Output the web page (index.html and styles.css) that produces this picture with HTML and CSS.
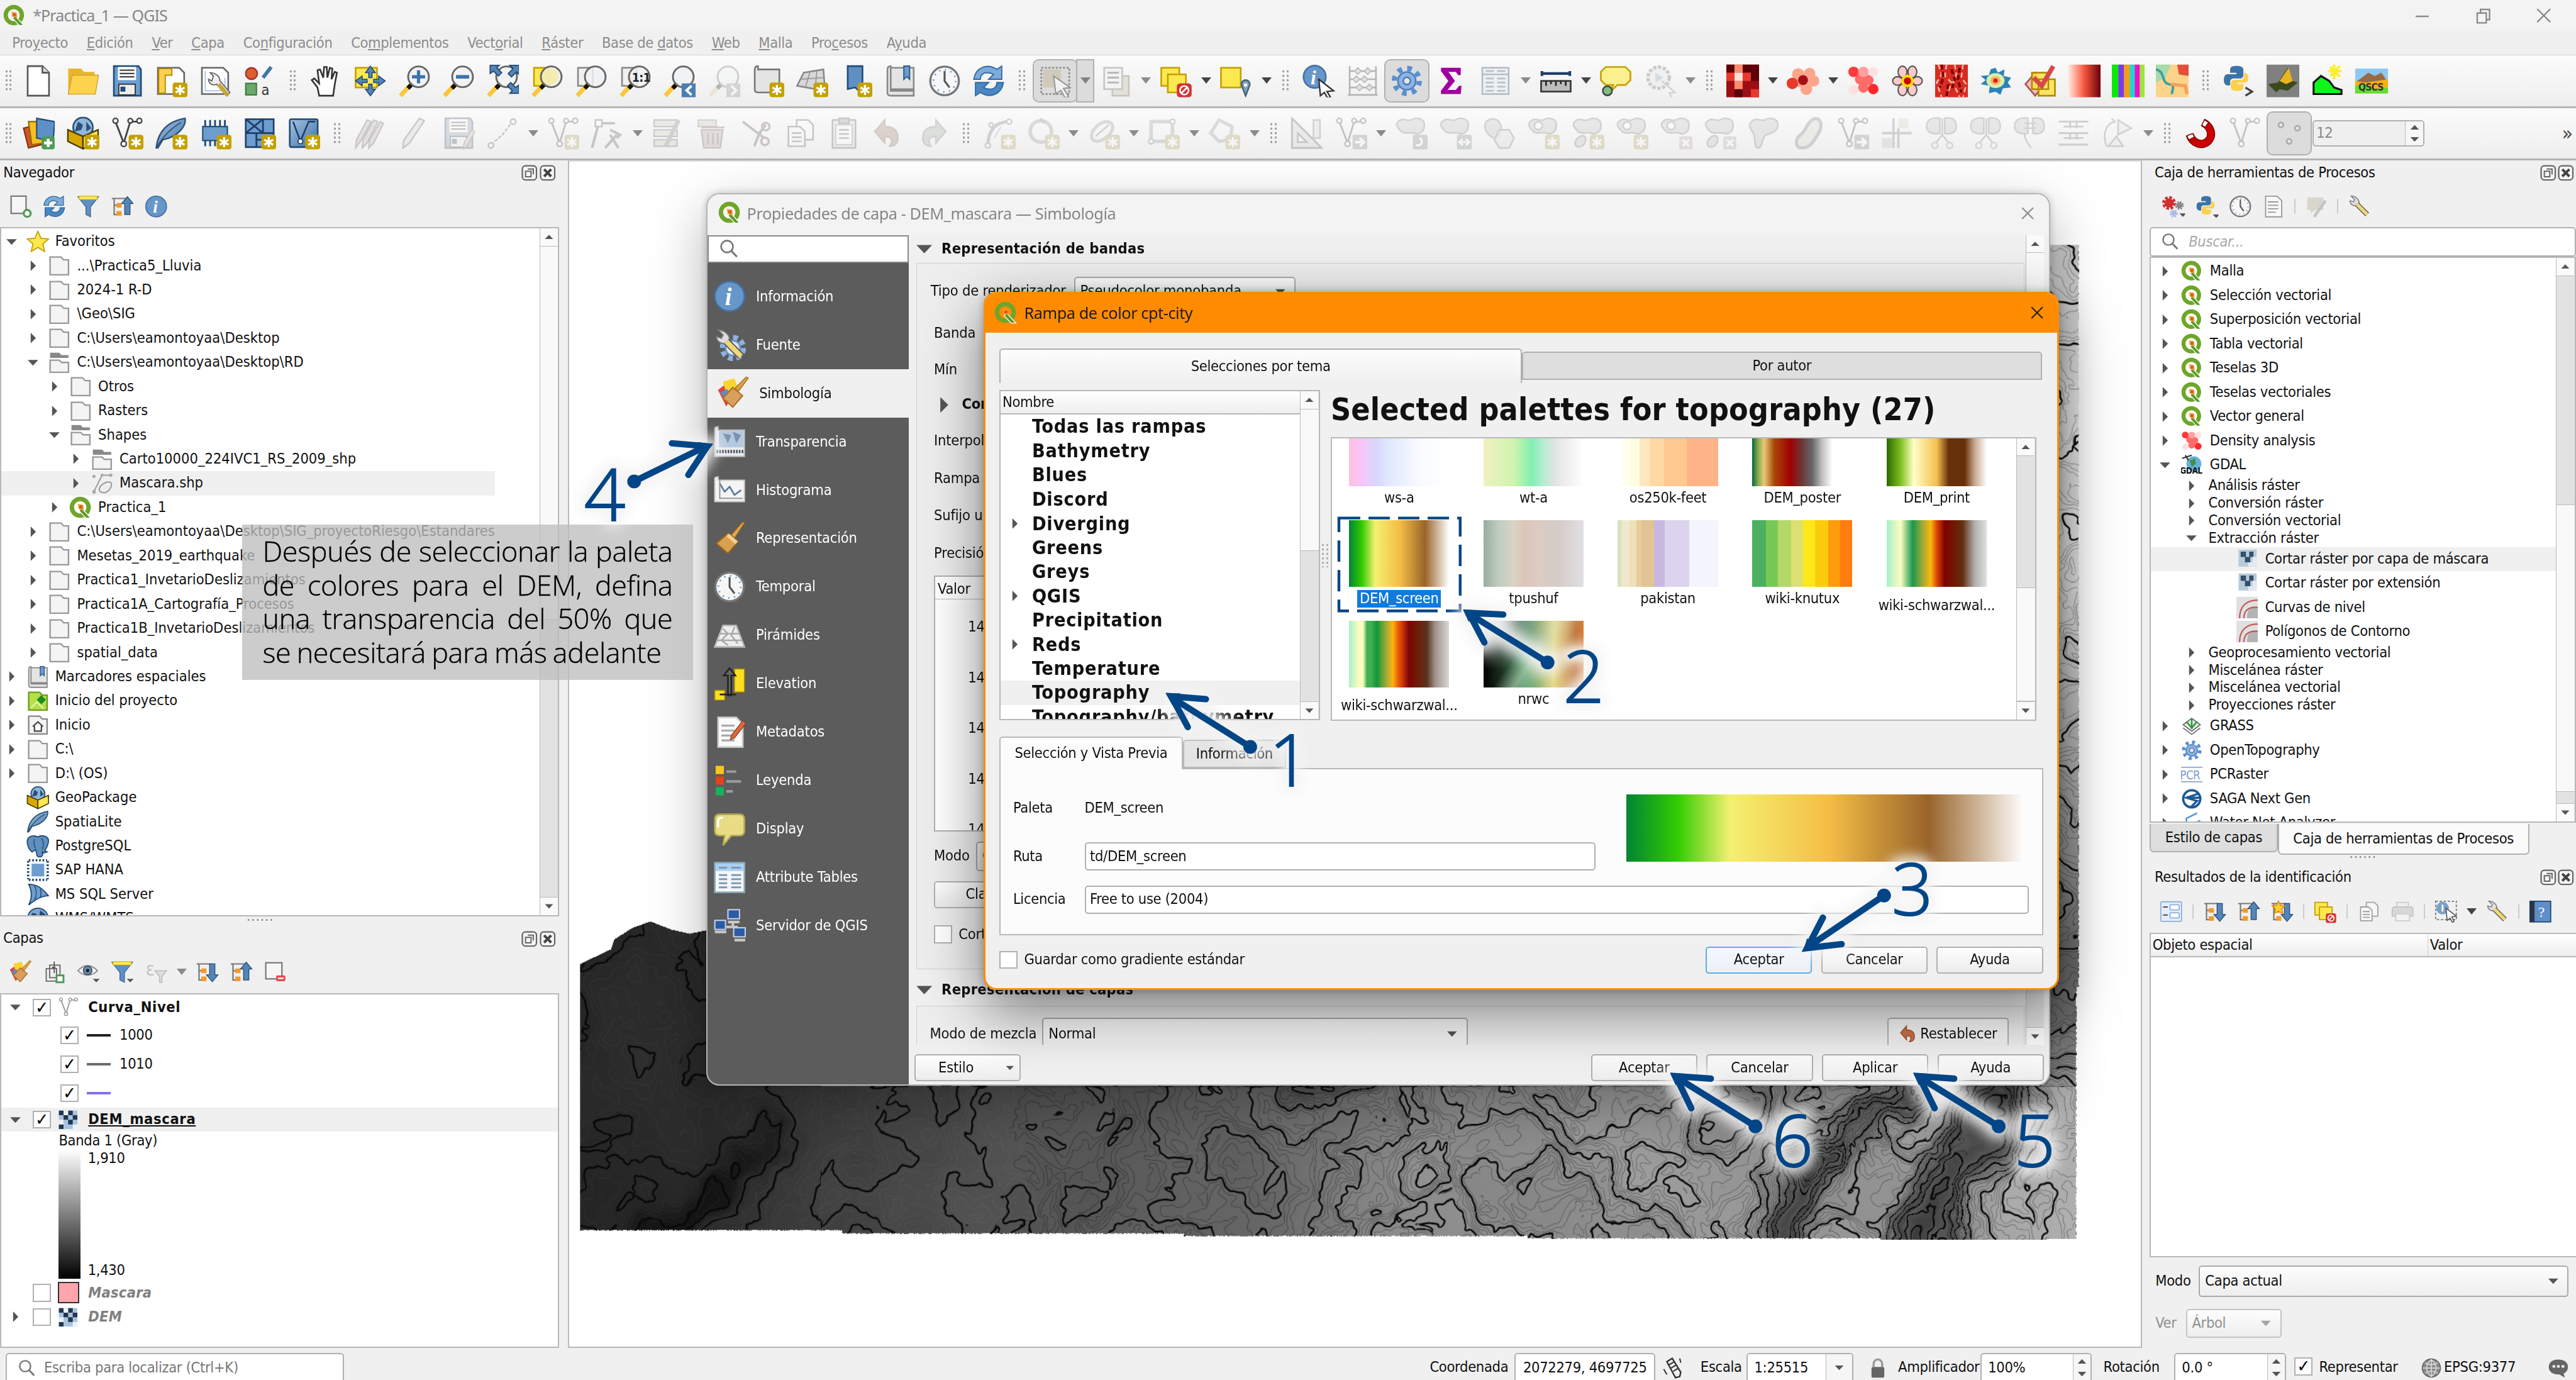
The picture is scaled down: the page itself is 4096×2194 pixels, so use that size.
FILE: index.html
```
<!DOCTYPE html>
<html lang="es">
<head>
<meta charset="utf-8">
<title>*Practica_1 — QGIS</title>
<link rel="stylesheet" href="styles.css">
</head>
<body>
<svg class="defs" aria-hidden="true">
<defs>
<linearGradient id="gr"><stop offset="0" stop-color="#fff0e8"/><stop offset=".5" stop-color="#f8553c"/><stop offset="1" stop-color="#67000d"/></linearGradient>
<linearGradient id="gb" x1="0" y1="0" x2="1" y2="1"><stop offset="0" stop-color="#a5c4e2"/><stop offset="1" stop-color="#3c72a8"/></linearGradient>
<filter id="halo" x="-10%" y="-10%" width="120%" height="120%" color-interpolation-filters="sRGB"><feMorphology in="SourceAlpha" operator="dilate" radius="3.4"/><feGaussianBlur stdDeviation="3.8" result="a"/><feFlood flood-color="#f4f4f4" flood-opacity=".92"/><feComposite in2="a" operator="in" result="g"/><feMerge><feMergeNode in="g"/><feMergeNode in="SourceGraphic"/></feMerge></filter>
</defs>
<symbol id="bd" viewBox="0 0 20 20"><rect x="11" y="11" width="9" height="9" rx="1.6" fill="#c4a000"/><path d="M15.5 12.4v6.2M12.8 14l5.4 3.1M18.2 14l-5.4 3.1" stroke="#fff" stroke-width="1.3"/></symbol>
<symbol id="bp" viewBox="0 0 20 20"><rect x="12" y="12" width="8" height="8" rx="1.6" fill="#4e9a58"/><path d="M16 13.5v5M13.5 16h5" stroke="#fff" stroke-width="1.7"/></symbol>
<symbol id="rt" viewBox="0 0 8 8"><path d="M2.6 .8l3.200 3.200-3.200 3.200z" fill="#555"/></symbol>
<symbol id="dn" viewBox="0 0 8 8"><path d="M.8 2.4h6.4L4 5.8z" fill="#555"/></symbol>
<symbol id="up" viewBox="0 0 8 8"><path d="M.8 5.6h6.4L4 2.2z" fill="#555"/></symbol>
<symbol id="mag" viewBox="0 0 12 12"><circle cx="5" cy="4.6" r="3.6" fill="none" stroke="#777" stroke-width="1"/><path d="M7.6 7.2l3.4 3.6" stroke="#777" stroke-width="1.2"/></symbol>
<symbol id="dk" viewBox="0 0 10 10"><rect x=".6" y=".6" width="8.8" height="8.8" rx="2" fill="#f6f6f6" stroke="#666" stroke-width=".9"/><path d="M4 2.6h3.4V6M2.6 4h3.4v3.4H2.6z" fill="none" stroke="#666" stroke-width=".8"/></symbol>
<symbol id="dx" viewBox="0 0 10 10"><rect x=".6" y=".6" width="8.8" height="8.8" rx="2" fill="#f6f6f6" stroke="#666" stroke-width=".9"/><path d="M2.8 2.8l4.4 4.4M7.2 2.8L2.8 7.2" stroke="#444" stroke-width="1.6"/></symbol>
<symbol id="q" viewBox="0 0 20 20"><circle cx="9.6" cy="9.6" r="7.3" fill="none" stroke="#6fa52b" stroke-width="3.8"/><path d="M10.5 10l8.3 9h-4.2l-6-6.400z" fill="#5b9a2a" stroke="#fff" stroke-width=".7"/><path d="M7.500 6.600l4.700.8.6 4.700-4.600-1z" fill="#f0a040"/><circle cx="10.200" cy="9.300" r="1.500" fill="#e05a10"/></symbol>
<symbol id="star" viewBox="0 0 20 20"><path d="M10 1l2.700 6 6.500.6-4.900 4.300 1.500 6.500L10 15l-5.800 3.400 1.500-6.500L.8 7.600 7.300 7z" fill="#fce94f" stroke="#c4a000"/></symbol>
<symbol id="fo" viewBox="0 0 20 20"><path d="M2 2.500h9.500l2.300 2.500H18v13H2z" fill="#f4f4f4" stroke="#999" stroke-width="1.300"/></symbol>
<symbol id="foo" viewBox="0 0 20 20"><path d="M2 1.500h8l1.800 2H18v2.500H2z" fill="#888"/><path d="M2 8h8l2 2h6v8.500H2z" fill="#f4f4f4" stroke="#999" stroke-width="1.300"/></symbol>
<symbol id="vec" viewBox="0 0 20 20"><path d="M3 17L10 3h7.500M8 17c-2-4 5-9 9-8 3 1 0 8-4 9-3 .6-4 0-5-1z" fill="#eee" stroke="#999" stroke-width="1.100"/><circle cx="3" cy="4" r="1.400" fill="#aaa"/><circle cx="3" cy="17.500" r="1.600" fill="#aaa"/><circle cx="10" cy="3" r="1.300" fill="#aaa"/><circle cx="17.500" cy="3" r="1.500" fill="#aaa"/></symbol>
<symbol id="bm" viewBox="0 0 20 20"><path d="M2 3q0-2 2-2v14h14v4H4q-2 0-2-2zM4 2h14v14H4z" fill="#e4e4e4" stroke="#888" stroke-width="1"/><path d="M12 1h3.500v8l-1.700-1.700L12 9z" fill="#6d9dcf" stroke="#2f5f90" stroke-width=".8"/></symbol>
<symbol id="hp" viewBox="0 0 20 20"><path d="M2 2.500h9.500l2.300 2.500H18v13H2z" fill="#b4e04a" stroke="#6f9a20" stroke-width="1.300"/><path d="M13 5l4 4-4 4-4-4z" fill="#1f8a1f"/><path d="M4 16l5-5 6 6" fill="none" stroke="#f4ffd0" stroke-width=".8"/></symbol>
<symbol id="ho" viewBox="0 0 20 20"><path d="M2 2.500h9.500l2.300 2.500H18v13H2z" fill="#f4f4f4" stroke="#888" stroke-width="1.300"/><path d="M5.500 11.500l4.500-4 4.500 4M7 11v4.500h6V11" fill="#fff" stroke="#444" stroke-width="1.200"/></symbol>
<symbol id="gp" viewBox="0 0 20 20"><circle cx="10" cy="6.500" r="6" fill="#8fb7dd" stroke="#2d4f74"/><path d="M7 3l3 2-1 3-4 1M12 3l3 4-3 2" fill="#2d4f74"/><path d="M.8 8l9.200 4v7.500L.8 15z" fill="#d8a800" stroke="#4d3a00" stroke-width=".9"/><path d="M19.200 8L10 12v7.500l9.200-4.500z" fill="#fce94f" stroke="#4d3a00" stroke-width=".9"/></symbol>
<symbol id="fe" viewBox="0 0 20 20"><path d="M1 19C2 10 7 3 18.500 1c1 5-5 11.500-13.500 13L2 19z" fill="url(#gb)" stroke="#2d4f74" stroke-width=".9"/><path d="M1 19C5 12 10 7 16 3.500" stroke="#2d4f74" stroke-width=".7" fill="none"/></symbol>
<symbol id="pg" viewBox="0 0 20 20"><path d="M1 4c2-4 7-3 9-2 3-2 8-1 9 2 1 4-2 8-3 10l2 1-3 1-1-1v3c-1 2-5 2-5-1l-1-4-3 2C2 13 0 8 1 4z" fill="#5f8fbe" stroke="#234a72"/><path d="M7 4c-1 3 0 6 1 8M13 3c2 2 2 6 1 10" fill="none" stroke="#234a72" stroke-width=".8"/></symbol>
<symbol id="hana" viewBox="0 0 20 20"><rect x="4.500" y="4.500" width="11" height="11" fill="#6d9dcf"/><path d="M2 1.500h16M2 18.500h16M1.500 2v16M18.500 2v16" stroke="#234a72" stroke-width="2" stroke-dasharray="1.500 1.500"/></symbol>
<symbol id="ms" viewBox="0 0 20 20"><path d="M2 1c6 0 12 3 17 10-5 0-11 3-17 8 3-6 3-12 0-18z" fill="#6d9dcf" stroke="#234a72"/><path d="M7 2c2 4 2 9 0 13M12 5c1 3 1 5 0 8" fill="none" stroke="#234a72" stroke-width=".8"/></symbol>
<symbol id="gl" viewBox="0 0 20 20"><circle cx="10" cy="10" r="9" fill="#7da7d0" stroke="#234a72"/><path d="M5 5l4 1-1 5-5 1zM12 3l5 4-3 5-3-3z" fill="#234a72"/></symbol>
<symbol id="ggl" viewBox="0 0 20 20"><circle cx="10" cy="10" r="8.500" fill="#8a8a8a" stroke="#666"/><path d="M2 10h16M10 2v16M4 5q6 4 12 0M4 15q6-4 12 0M10 2q-9 8 0 16q9-8 0-16" fill="none" stroke="#ddd" stroke-width=".9"/></symbol>
<symbol id="new" viewBox="0 0 20 20"><path d="M3.500 1h9l4 4v14h-13z" fill="#fff" stroke="#555" stroke-width="1"/><path d="M12.500 1v4h4" fill="#ddd" stroke="#555"/></symbol>
<symbol id="open" viewBox="0 0 20 20"><path d="M1 18V2.500h8l1.500 2H17V7" fill="#e8b62c"/><path d="M3.500 6.500H19.500L17.500 18H1z" fill="#fdd34d" stroke="#caa030" stroke-width=".5"/></symbol>
<symbol id="save" viewBox="0 0 20 20"><path d="M2 1h15l1.500 2v16H2z" fill="#6d9dcf" stroke="#204a75"/><rect x="4.500" y="1.500" width="11" height="8" fill="#fff"/><path d="M5.500 3.500h9M5.500 5.500h9M5.500 7.500h9" stroke="#444" stroke-width=".8"/><rect x="5" y="12" width="10" height="6.500" fill="#eee" stroke="#333" stroke-width=".7"/><rect x="6" y="13.500" width="3" height="3" fill="#204a75"/></symbol>
<symbol id="lay" viewBox="0 0 20 20"><path d="M2 2h13l3 3v13H2z" fill="#fff" stroke="#666"/><path d="M2.500 2.500h8v4h-4v11h-4z" fill="#fcd04f" stroke="#b88a00" stroke-width=".7"/><use href="#bd"/></symbol>
<symbol id="lm" viewBox="0 0 20 20"><path d="M2 2h13l3 3v13H2z" fill="#fff" stroke="#666"/><path d="M4 4v12h12V8" fill="none" stroke="#a8c3ee" stroke-width=".7"/><path d="M7 5l2 2-1 3-2-1c0 3 3 4 5 3l6 7 2-2-6-7c0-3-3-5-6-5z" fill="#eee" stroke="#666" stroke-width=".7"/><path d="M12 12l6 7" stroke="#c8a83c" stroke-width="2.500"/></symbol>
<symbol id="sty" viewBox="0 0 20 20"><circle cx="5" cy="5.500" r="3.500" fill="#d9622b" stroke="#a33"/><rect x="1.500" y="11.500" width="6.500" height="7" fill="#6ca86c" stroke="#3a7a3a" stroke-width=".8"/><path d="M12 8l5-6.500" stroke="#3f74aa" stroke-width="2.200"/><text x="11" y="18.500" font-size="9" font-family="DejaVu Sans" fill="#333">a</text></symbol>
<symbol id="hand" viewBox="0 0 20 20"><path d="M6 19l-1-5L1.500 9.500l1.500-1 3 3L5 3.500l1.500-.5 2 5L9 1.500h1.600L11 8l1.500-6 1.500.5L13.500 9l2-4.500 1.300.5-1.300 7-1 7z" fill="#fff" stroke="#333" stroke-width="1"/></symbol>
<symbol id="pan" viewBox="0 0 20 20"><rect x="1" y="2" width="13" height="12" fill="#fce94f" stroke="#c4a000"/><path d="M10 1l3 4h-2v3h-2V5H7zM10 19l3-4h-2v-3h-2v3H7zM1 10l4-3v2h3v2H5v2zM19 10l-4-3v2h-3v2h3v2z" fill="#5585b8" stroke="#204a75" stroke-width=".6"/></symbol>
<symbol id="zb" viewBox="0 0 20 20"><path d="M8 12L1.500 19" stroke="#fcc53a" stroke-width="2.600"/><path d="M9 11.500L6 14.500" stroke="#111" stroke-width="2.600"/><circle cx="12.500" cy="7.500" r="6.300" fill="#eef1f3" fill-opacity=".85" stroke="#666" stroke-width="1.100"/></symbol>
<symbol id="zi" viewBox="0 0 20 20"><use href="#zb"/><path d="M12.500 3.500v8M8.500 7.500h8" stroke="#3f74aa" stroke-width="2"/></symbol>
<symbol id="zo" viewBox="0 0 20 20"><use href="#zb"/><path d="M8.500 7.500h8" stroke="#3f74aa" stroke-width="2.200"/></symbol>
<symbol id="zf" viewBox="0 0 20 20"><use href="#zb"/><path d="M2.500 .5h5.500L6.500 2l3 3-2 2-3-3L2.500 5.500zM20 .5v5.500L18.500 4.500l-3 3-2-2 3-3L14.500 .5zM20 17.500h-5.500l1.500-1.500-3-3 2-2 3 3 2-1.500z" fill="#5585b8" stroke="#204a75" stroke-width=".7"/></symbol>
<symbol id="zs" viewBox="0 0 20 20"><rect x="2" y="2" width="9" height="11" fill="#fce94f" stroke="#c4a000"/><use href="#zb"/><circle cx="12" cy="7.500" r="5" fill="#f4ea9a" opacity=".7"/></symbol>
<symbol id="zl" viewBox="0 0 20 20"><rect x="2" y="2" width="9" height="11" fill="#f0f0f0" stroke="#888"/><use href="#zb"/></symbol>
<symbol id="z1" viewBox="0 0 20 20"><use href="#zl"/><text x="8" y="10.500" font-size="7.500" font-weight="700" font-family="DejaVu Sans Condensed" fill="#222">1:1</text></symbol>
<symbol id="zp" viewBox="0 0 20 20"><use href="#zb"/><rect x="11.500" y="11.500" width="8.500" height="8.500" fill="#4a7eb4"/><path d="M17.500 13l-3 2.800 3 2.800" fill="none" stroke="#fff" stroke-width="1.500"/></symbol>
<symbol id="zn" viewBox="0 0 20 20"><use href="#zb"/><rect x="11.500" y="11.500" width="8.500" height="8.500" fill="#888"/><path d="M14.500 13l3 2.800-3 2.800" fill="none" stroke="#fff" stroke-width="1.500"/></symbol>
<symbol id="nm" viewBox="0 0 20 20"><path d="M2 3q0-2 2-2v2h13v14H4q-2 0-2-2z" fill="#e4e4e4" stroke="#777"/><use href="#bd"/></symbol>
<symbol id="n3" viewBox="0 0 20 20"><path d="M5 5l12-2 1 13L1 13z" fill="#d8d8d8" stroke="#888"/><path d="M3 9l14-1M9 4L6 14M13 4l-1 11" stroke="#999" stroke-width=".7"/><use href="#bd"/></symbol>
<symbol id="nb" viewBox="0 0 20 20"><path d="M5 1h9v17l-4.500-4L5 15z" fill="#5f90c4" stroke="#204a75"/><use href="#bd"/></symbol>
<symbol id="clk" viewBox="0 0 20 20"><circle cx="10" cy="10" r="8.700" fill="#f7f7f7" stroke="#777" stroke-width="1.300"/><circle cx="10" cy="10" r="6.800" fill="none" stroke="#6d9dcf" stroke-width="1.100" stroke-dasharray=".8 2.760"/><path d="M10 4v6l3 4" fill="none" stroke="#555" stroke-width="1.200"/></symbol>
<symbol id="ref" viewBox="0 0 20 20"><path d="M1 9C2 2 9-1 15 3l3-2v8h-8l3-3C9 4 5 5 5 9z" fill="#7fabd9" stroke="#2d69a6" stroke-width=".7"/><path d="M19 11c-1 7-8 10-14 6l-3 2v-8h8l-3 3c4 2 8 1 8-3z" fill="#4a86c2" stroke="#2d69a6" stroke-width=".7"/></symbol>
<symbol id="sel" viewBox="0 0 20 20"><rect x="1.500" y="2" width="17" height="16" fill="none" stroke="#888" stroke-dasharray="1.200 1"/><rect x="2.500" y="3" width="11" height="11" fill="#cfcab9"/><path d="M9 7l10 7-4 .6 3 4.800-2 1-2.600-4.700-3 2.300z" fill="#f2f2f2" stroke="#999" stroke-width=".8"/></symbol>
<symbol id="frm" viewBox="0 0 20 20"><rect x="8" y="7" width="10" height="12" fill="#e0dccf" stroke="#bbb"/><rect x="3" y="2" width="11" height="13" fill="#f3f3f3" stroke="#bbb"/><path d="M5 5h7M5 8h7M5 11h7" stroke="#aaa" stroke-width="1.200"/></symbol>
<symbol id="des" viewBox="0 0 20 20"><rect x="1" y="2" width="11" height="11" fill="#fce94f" stroke="#c4a000"/><rect x="5" y="6" width="11" height="11" fill="#fce94f" stroke="#c4a000"/><rect x="10.500" y="11.500" width="9" height="8.500" rx="2" fill="#d93030"/><circle cx="15" cy="15.700" r="2.600" fill="none" stroke="#fff"/><path d="M13.500 17.200l3-3" stroke="#fff"/></symbol>
<symbol id="slo" viewBox="0 0 20 20"><rect x="1" y="2" width="12" height="12" fill="#fce94f" stroke="#c4a000"/><path d="M16 19l-2.300-6a2.500 2.500 0 1 1 4.600 0z" fill="#7fa5bd" stroke="#44667c"/><circle cx="16" cy="12.500" r="1" fill="#fff"/></symbol>
<symbol id="inf" viewBox="0 0 20 20"><circle cx="10" cy="10" r="9" fill="#6796c9" stroke="#4472a5"/><text x="7.200" y="15.500" font-size="15" font-style="italic" font-weight="700" font-family="Liberation Serif" fill="#fff">i</text></symbol>
<symbol id="idf" viewBox="0 0 20 20"><circle cx="7.500" cy="7.500" r="6.800" fill="#6796c9" stroke="#4472a5"/><text x="5" y="12" font-size="12" font-style="italic" font-weight="700" font-family="Liberation Serif" fill="#fff">i</text><path d="M10 9l9 7-4 .4 2 3.300-1.600.8-2-3.500-2.400 2z" fill="#fff" stroke="#333" stroke-width=".9"/></symbol>
<symbol id="aba" viewBox="0 0 20 20"><path d="M2 1v18M18 1v18M2 4h16M2 9h16M2 14h16M1 18.500h18" stroke="#b5b5b5" fill="none"/><path d="M5 4l2-2 2 2-2 2zM11 4l2-2 2 2-2 2zM4 9l2-2 2 2-2 2zM9 9l2-2 2 2-2 2zM6 14l2-2 2 2-2 2zM12 14l2-2 2 2-2 2z" fill="#eadfe0" stroke="#bbb" stroke-width=".7"/></symbol>
<symbol id="gear" viewBox="0 0 20 20"><circle cx="10" cy="10" r="7.600" fill="none" stroke="#5b8fd0" stroke-width="3.200" stroke-dasharray="2.800 3.170"/><circle cx="10" cy="10" r="5.400" fill="#8fb2e0" stroke="#4b7fc0"/><circle cx="10" cy="10" r="2.200" fill="#e6e6e6" stroke="#4b7fc0"/></symbol>
<symbol id="sig" viewBox="0 0 20 20"><path d="M4 2h12v4.500h-1.500L13 4.500H8.500L12.500 10l-4.500 5.500h5L15 13h1.500L16 18H4v-2l4.500-6L4 4z" fill="#a000a0"/></symbol>
<symbol id="tab" viewBox="0 0 20 20"><rect x="2" y="2" width="16" height="16" fill="#eef1f4" stroke="#b5bcc4"/><path d="M2 6h16" stroke="#b5bcc4"/><path d="M4 4h5M11 4h5M4 8.500h5M4 11h5M4 13.500h5M4 16h5M11 8.500h5M11 11h5M11 13.500h5M11 16h5" stroke="#bcc3ca" stroke-width="1.100"/></symbol>
<symbol id="rul" viewBox="0 0 20 20"><path d="M1.500 5.500h17M1.500 4v3M18.500 4v3" stroke="#1f3f66" stroke-width="1.600"/><rect x="1" y="10" width="18" height="6.500" fill="#bdbdbd" stroke="#333"/><path d="M4 10v3M7 10v2M10 10v3M13 10v2M16 10v3" stroke="#222"/></symbol>
<symbol id="tip" viewBox="0 0 20 20"><path d="M4 1.500h12l3 3v5l-3 3h-5l-4 4 1.500-4H4l-3-3v-5z" fill="#fbf08f" stroke="#c4a000"/><circle cx="5" cy="16" r="2.800" fill="#7fbf7f" stroke="#444"/></symbol>
<symbol id="act" viewBox="0 0 20 20"><circle cx="9" cy="8" r="6.500" fill="#efefef" stroke="#c0c0c0" stroke-width="2" stroke-dasharray="2 1"/><path d="M7 5l5 3-5 3z" fill="#ccd6df"/><path d="M11 10l8 7-3.500.3 1.500 2.700" fill="#f5f5f5" stroke="#ccc"/></symbol>
<symbol id="d1" viewBox="0 0 20 20"><rect width="20" height="20" fill="#9c0d14"/><path d="M0 0h5v5H0zM10 0h10v5H10zM5 15h5v5H5zM15 5h5v5h-5z" fill="#5d0008"/><path d="M5 0h5v5H5zM5 10h5v5H5z" fill="#fc8a6b"/><path d="M5 5h5v5H5z" fill="#fde4da"/><path d="M0 5h5v5H0zM10 5h5v5h-5zM15 15h5v5h-5z" fill="#e8392c"/></symbol>
<symbol id="d2" viewBox="0 0 20 20"><g fill="#fca58a"><circle cx="7" cy="6" r="3.700"/><circle cx="14" cy="5.500" r="3.500"/><circle cx="16.500" cy="10" r="3.400"/><circle cx="12" cy="15" r="3.600"/><circle cx="9" cy="9" r="5"/></g><circle cx="3.500" cy="11.500" r="3.500" fill="#e8392c"/><circle cx="10" cy="9.500" r="3" fill="#a50f15"/></symbol>
<symbol id="d3" viewBox="0 0 20 20"><g fill="#ff6a6a"><circle cx="8" cy="9" r="3.200"/><circle cx="13" cy="9.500" r="3.200"/><circle cx="10" cy="14" r="3.200"/></g><circle cx="4" cy="4.500" r="3.200" fill="#ff3a3a"/><circle cx="10" cy="4.500" r="3.200" fill="#ffa0a0"/><circle cx="16" cy="4.500" r="3" fill="#ffe0e0"/><circle cx="16" cy="15" r="3.200" fill="#ff2a2a"/><circle cx="4" cy="15.500" r="3" fill="#ffe0e0"/></symbol>
<symbol id="d4" viewBox="0 0 20 20"><g fill="#ffc9c9" stroke="#555" stroke-width=".8"><ellipse cx="7" cy="4.500" rx="2.700" ry="3.500"/><ellipse cx="13" cy="4.500" rx="2.700" ry="3.500"/><ellipse cx="4" cy="10" rx="3" ry="2.600"/><ellipse cx="16" cy="10" rx="3" ry="2.600"/><ellipse cx="7" cy="15.500" rx="2.700" ry="3.500"/><ellipse cx="13" cy="15.500" rx="2.700" ry="3.500"/></g><circle cx="10" cy="10" r="3" fill="#c00" stroke="#fd0" stroke-width="1.600"/></symbol>
<symbol id="d5" viewBox="0 0 20 20"><rect width="20" height="20" fill="#d82c20"/><path d="M2 0l2 6-3 5 3 9M7 0l-1 7 4 4-3 9M12 0l1 6-2 5 4 9M17 0l-1 8 3 4-2 8" fill="none" stroke="#ffb8a0" stroke-width="1" stroke-dasharray="3 2"/><path d="M4 0l1 8-2 6M10 3l2 6-2 7M15 2l-1 7 2 8M8 12l-1 8" fill="none" stroke="#7d0008" stroke-width="1.500" stroke-dasharray="3 1.500"/></symbol>
<symbol id="d6" viewBox="0 0 20 20"><path d="M10 2l1.500 3 4-2-.5 4 4.500 1-2 3 2 3-5 .5-1.500 4-3-2-4 1 .5-4.500L1 12l3-2.500L1 7l5-.5L7 3z" fill="#2b83ba"/><ellipse cx="10" cy="9.800" rx="5.500" ry="4.500" fill="#d8eeaa"/><ellipse cx="10" cy="9.800" rx="3" ry="2.600" fill="#fdae61"/><circle cx="10" cy="9.800" r="1.300" fill="#d7191c"/></symbol>
<symbol id="d7" viewBox="0 0 20 20"><path d="M1 12l6-7 4 9-4 5z" fill="#f2bcbc" stroke="#a55"/><path d="M5 5h10v10H5zM9 9h10v10H9z" fill="#fbe34a" fill-opacity=".85" stroke="#b08a00"/><path d="M6 8l5 5 7-12" fill="none" stroke="#d94848" stroke-width="2.800"/></symbol>
<symbol id="d8" viewBox="0 0 20 20"><rect width="20" height="20" fill="url(#gr)"/></symbol>
<symbol id="d9" viewBox="0 0 20 20"><rect width="20" height="20" fill="#9be83a"/><path d="M0 0h4v20H0z" fill="#0ce80c"/><path d="M4 0h3.500v20H4z" fill="#7a3ae8"/><path d="M7.500 0H11v20H7.500z" fill="#f89a1c"/><path d="M11 0h3v20h-3z" fill="#19d8d8"/><path d="M14 0h3v20h-3z" fill="#f40cd0"/></symbol>
<symbol id="d10" viewBox="0 0 20 20"><rect width="20" height="20" fill="#fbd48a"/><path d="M0 0h9l-3 8-6 3z" fill="#a8dba8"/><path d="M0 3c6 1 3 8 8 9s1 4 2 6" fill="none" stroke="#3aa0a8" stroke-width="1.500"/><path d="M13 0h7v7l-6-1z" fill="#e0503a"/><path d="M9 12l9 1 1 5" fill="none" stroke="#f5a05a" stroke-width="2"/></symbol>
<symbol id="py" viewBox="0 0 20 20"><path d="M10 1c-4 0-4.500 1.500-4.500 3v2H10v1H4C2 7 1 8.500 1 11s1 4 3 4h1.500v-2.500c0-1.500 1-2.500 2.500-2.500h4.500c1.500 0 2.500-1 2.500-2.500V4c0-2-1.500-3-5-3z" fill="#3b73a8"/><path d="M10.500 19c4 0 4.500-1.500 4.500-3v-2h-4.500v-1h5.500c2 0 2.500-1.500 2.500-3.500S17.500 6 16 6h-.5v2.500c0 1.500-1.500 2.500-3 2.500H8.500C7 11 6 12 6 13.500V16c0 2 1.500 3 4.500 3z" fill="#fcd04f"/></symbol>
<symbol id="pyc" viewBox="0 0 20 20"><use href="#py" width="17" height="17"/><path d="M14 14l4 2.500-4 2.500" fill="none" stroke="#444" stroke-width="1.300"/></symbol>
<symbol id="m1" viewBox="0 0 20 20"><rect width="20" height="20" fill="#808080"/><path d="M1 12l6-1 6-9 3 8 3 1-6 5-5-1-2 2z" fill="#3b4a1c"/><path d="M8 10l5.500-8L16 10l-4 2z" fill="#e8b420"/></symbol>
<symbol id="m2" viewBox="0 0 20 20"><path d="M1.500 18V11L6 7l5 3 3 4 4.500 1.500V18z" fill="#0cf81c" stroke="#111" stroke-width="1.200"/><path d="M14 0v9M10.500 4h8M11.500 1.500l6 6M17.500 1l-6 6" stroke="#fdf02a" stroke-width="1.600"/></symbol>
<symbol id="m3" viewBox="0 0 20 20"><rect y="2.500" width="20" height="15" fill="#8cc8f4"/><path d="M0 11l4-3 4-3 4 2 4-2 4 6v6.500H0z" fill="#9a6a44"/><path d="M0 10l6 1 7-1 7-1v8.500H0z" fill="#f8b010"/><path d="M0 13l6-1 6 3 8-1v3.500H0z" fill="#5fe02f"/><text x="2" y="16" font-size="6" font-weight="700" font-family="DejaVu Sans Condensed" fill="#333">QSCS</text></symbol>
<symbol id="ds" viewBox="0 0 20 20"><path d="M1 7l8-2 3 12-8 2z" fill="#d2562a" stroke="#803010" stroke-width=".8"/><path d="M4 3l9 0 1 13-8 1z" fill="#f4c020" stroke="#8a6a00" stroke-width=".8"/><path d="M9 1l11 2-1 12-10-2z" fill="#5f8fc8" stroke="#204a75" stroke-width=".8"/><use href="#bp"/></symbol>
<symbol id="gpn" viewBox="0 0 20 20"><use href="#gp"/><use href="#bd"/></symbol>
<symbol id="vl" viewBox="0 0 20 20"><path d="M3 3l5 13 4-13h5" fill="none" stroke="#444" stroke-width="1.100"/><g fill="#fff" stroke="#444" stroke-width=".9"><circle cx="3" cy="2.500" r="1.500"/><circle cx="8" cy="16.500" r="1.600"/><circle cx="12" cy="2.500" r="1.400"/><circle cx="17.500" cy="2.500" r="1.500"/></g></symbol>
<symbol id="vn" viewBox="0 0 20 20"><use href="#vl"/><use href="#bd"/></symbol>
<symbol id="fen" viewBox="0 0 20 20"><use href="#fe"/><use href="#bd"/></symbol>
<symbol id="mem" viewBox="0 0 20 20"><path d="M4 2v4M7 2v4M10 2v4M13 2v4M16 2v4M4 14v4M7 14v4M10 14v4" stroke="#204a75" stroke-width="1.100"/><rect x="2.500" y="6" width="15" height="8.500" fill="#6d9dcf" stroke="#204a75" stroke-width=".8"/><use href="#bd"/></symbol>
<symbol id="men" viewBox="0 0 20 20"><path d="M1.500 1.500h17v17h-17z" fill="#6d9dcf" stroke="#1f3f66"/><path d="M1.500 10h17M8 10v8.500M12 1.500V10M1.500 1.500L12 10M12 1.500L1.500 10M8 14h6" stroke="#1f3f66" stroke-width="1.100"/><use href="#bd"/></symbol>
<symbol id="vv" viewBox="0 0 20 20"><rect x="1.500" y="1.500" width="17" height="17" rx="1" fill="url(#gb)" stroke="#204a75"/><path d="M3.500 3l4.500 12 5-12h4" fill="none" stroke="#1f3f66"/><circle cx="8" cy="15" r="1.500" fill="#fff" stroke="#1f3f66" stroke-width=".7"/><use href="#bd"/></symbol>
<symbol id="pe" viewBox="0 0 20 20"><path d="M13 1l3 1.500L7 16l-4 3 .5-4.500z" fill="#d9d2c4" stroke="#555" stroke-width=".9"/></symbol>
<symbol id="pes" viewBox="0 0 20 20"><path d="M8 2l2.500 1L4 15l-3 4 .5-5zM12 2l2.500 1L8 16l-3 3 .5-5zM16 3l2 1-6 12-3 3 .5-5z" fill="#c9a89c" stroke="#555" stroke-width=".8"/></symbol>
<symbol id="sve" viewBox="0 0 20 20"><use href="#save"/><path d="M18 8l2 1-5 9-2 2 .5-4z" fill="#e0b8a8" stroke="#855" stroke-width=".7"/></symbol>
<symbol id="lin" viewBox="0 0 20 20"><path d="M3 17L10 11l6-8" fill="none" stroke="#555" stroke-dasharray="2 1"/><circle cx="3" cy="17.500" r="1.600" fill="#fff" stroke="#555"/><circle cx="16.500" cy="3" r="1.600" fill="#fff" stroke="#555"/></symbol>
<symbol id="vt" viewBox="0 0 20 20"><path d="M5 4L1 19M5 4h10M9 19l7-8M12 8l6 3-2 2M12 11l5 8" fill="none" stroke="#555" stroke-width="1.600"/><rect x="3" y="2" width="4" height="4" fill="#fff" stroke="#555"/></symbol>
<symbol id="te" viewBox="0 0 20 20"><path d="M2 2h14v4H2zM2 8h14v4H2zM2 14h14v4H2z" fill="#cfcf9a" stroke="#666" stroke-width=".9"/><path d="M17 2L9 18" stroke="#777" stroke-width="2.500"/></symbol>
<symbol id="tr" viewBox="0 0 20 20"><path d="M2 2h11v4H2z" fill="#cfc39a" stroke="#777" stroke-width=".8"/><path d="M4 8h13l-1.500 11h-10z" fill="#c99" stroke="#944" stroke-width=".9"/><path d="M4 6.500h14M8 10v7M11 10v7M14 10v7" stroke="#944"/></symbol>
<symbol id="cut" viewBox="0 0 20 20"><path d="M2 3l13 10M9 18l3-8 4-5" stroke="#555" stroke-width="1.500"/><circle cx="16" cy="6" r="2.300" fill="none" stroke="#944" stroke-width="1.300"/><circle cx="15.500" cy="15" r="2.300" fill="none" stroke="#944" stroke-width="1.300"/></symbol>
<symbol id="cop" viewBox="0 0 20 20"><path d="M8 2h7l3 3v9H8z" fill="#fff" stroke="#555"/><path d="M3 6h7l3 3v9H3z" fill="#fff" stroke="#555"/><path d="M5 10h6M5 12.500h6M5 15h6" stroke="#555"/></symbol>
<symbol id="pas" viewBox="0 0 20 20"><rect x="3" y="2" width="14" height="17" fill="#d9d0b8" stroke="#555"/><path d="M5 5h10v12H5z" fill="#fff" stroke="#777" stroke-width=".7"/><path d="M7 8h6M7 10.500h6M7 13h6M7 1h6v3H7z" stroke="#555" fill="#999"/></symbol>
<symbol id="un" viewBox="0 0 20 20"><path d="M8 2v4c6 0 8 3 8 7s-3 5-5 5c2-3 2-6-3-6v4L2 9z" fill="#c8704a" stroke="#a85a30"/></symbol>
<symbol id="re" viewBox="0 0 20 20"><path d="M12 2v4c-6 0-8 3-8 7s3 5 5 5c-2-3-2-6 3-6v4l6-7z" fill="#8fae94" stroke="#686"/></symbol>
<symbol id="arc" viewBox="0 0 20 20"><path d="M3 18C3 8 8 3 16 3" fill="none" stroke="#777" stroke-width="2"/><path d="M7 13l4-7" stroke="#aaa"/><g fill="#fff" stroke="#777"><circle cx="3" cy="17.500" r="1.500"/><circle cx="16" cy="3" r="1.500"/><circle cx="5" cy="5" r="1.300"/></g><use href="#bd"/></symbol>
<symbol id="ci" viewBox="0 0 20 20"><circle cx="8.500" cy="9" r="6.500" fill="none" stroke="#8a9a8a" stroke-width="2.200"/><path d="M8 1.500l3 2" stroke="#777" stroke-width="2"/><use href="#bd"/></symbol>
<symbol id="el" viewBox="0 0 20 20"><ellipse cx="9" cy="9" rx="7.500" ry="4.500" transform="rotate(-40 9 9)" fill="none" stroke="#8a9a8a" stroke-width="2"/><path d="M5 12l8-7" stroke="#777"/><use href="#bd"/></symbol>
<symbol id="sq" viewBox="0 0 20 20"><rect x="2.500" y="3" width="13" height="12" fill="none" stroke="#8a9a8a" stroke-width="2.200"/><circle cx="15.500" cy="3" r="1.500" fill="#fff" stroke="#777"/><circle cx="2.500" cy="15" r="1.500" fill="#fff" stroke="#777"/><use href="#bd"/></symbol>
<symbol id="pol" viewBox="0 0 20 20"><path d="M7 2l8 4-1 8-7 1-5-5z" fill="none" stroke="#8a9a8a" stroke-width="2"/><use href="#bd"/></symbol>
<symbol id="tri" viewBox="0 0 20 20"><path d="M1 1v18h18z" fill="#e3cfc4" stroke="#555" stroke-width="1.200"/><path d="M4.500 10v5.500H10z" fill="#f4f4f4" stroke="#555"/><path d="M14 2h4v11h-4z" fill="#ddd8c0" stroke="#777"/></symbol>
<symbol id="vm" viewBox="0 0 20 20"><use href="#vl"/><rect x="11" y="11" width="9" height="9" rx="1" fill="#7a8a8a"/><path d="M12.500 15.500h5M15.500 13l2.500 2.500-2.500 2.500" stroke="#fff" fill="none" stroke-width="1.500"/></symbol>
<symbol id="bl" viewBox="0 0 20 20"><path d="M2 3c3-3 5 0 8-1 3-2 8-1 8 3 0 5-4 6-6 5-3-1-6 1-8-1S0 5 2 3z" fill="#b8c2b8" stroke="#777"/></symbol>
<symbol id="b1" viewBox="0 0 20 20"><use href="#bl"/><rect x="11" y="11" width="9" height="9" rx="1" fill="#7a8a8a"/><path d="M13 17c3 2 5-3 2-4" stroke="#fff" fill="none" stroke-width="1.400"/></symbol>
<symbol id="b1b" viewBox="0 0 20 20"><use href="#bl"/><rect x="11" y="11" width="9" height="9" rx="1" fill="#7a8a8a"/><path d="M12.500 15.500h6M14.500 13.500l-2 2 2 2M16.500 13.500l2 2-2 2" stroke="#fff" fill="none" stroke-width="1.200"/></symbol>
<symbol id="b2" viewBox="0 0 20 20"><path d="M2 3c5-4 10 0 9 5s-3 6-6 4-5-6-3-9z" fill="#b8c2b8" stroke="#777"/><path d="M10 8h6l3 5-3 6h-6l-3-5z" fill="#c8d4dc" fill-opacity=".8" stroke="#777"/></symbol>
<symbol id="b3" viewBox="0 0 20 20"><use href="#bl"/><circle cx="7" cy="5.500" r="2.400" fill="#fff" stroke="#777"/><use href="#bd"/></symbol>
<symbol id="b4" viewBox="0 0 20 20"><use href="#bl"/><path d="M3 18c-3-3 3-8 5-6s-1 8-5 6z" fill="#b8c2b8" stroke="#777"/><use href="#bd"/></symbol>
<symbol id="b5" viewBox="0 0 20 20"><use href="#bl"/><circle cx="7" cy="5.500" r="2.400" fill="#fff" stroke="#777"/><rect x="12" y="12" width="8" height="8" rx="1" fill="#c9a0a0"/><path d="M14 14l4 4M18 14l-4 4" stroke="#fff" stroke-width="1.300"/></symbol>
<symbol id="b5b" viewBox="0 0 20 20"><use href="#bl"/><path d="M3 18c-3-3 3-8 5-6s-1 8-5 6z" fill="#b8c2b8" stroke="#777"/><rect x="12" y="12" width="8" height="8" rx="1" fill="#c9a0a0"/><path d="M14 14l4 4M18 14l-4 4" stroke="#fff" stroke-width="1.300"/></symbol>
<symbol id="b6" viewBox="0 0 20 20"><path d="M2 3c3-3 5 0 8-1 3-2 8-1 8 3 0 4-4 5-7 6s-2 8-5 8-1-6-3-9-3-5-1-7z" fill="#b8c2b8" stroke="#777"/></symbol>
<symbol id="b7" viewBox="0 0 20 20"><path d="M12 2c5-3 7 3 4 8s-5 9-10 9-4-6-1-8 4-7 7-9z" fill="#d4d4bc" stroke="#777" stroke-width="2"/></symbol>
<symbol id="b8" viewBox="0 0 20 20"><path d="M9 1c-5-1-8 1-8 5s5 5 8 4zM12 1c5-1 7 1 7 5s-4 5-7 4z" fill="#b8c2b8" stroke="#777"/><path d="M10.500 1v10l-4 5M10.500 11l4 5" stroke="#777" fill="none"/><circle cx="6" cy="17.500" r="1.800" fill="none" stroke="#b08888"/><circle cx="15" cy="17.500" r="1.800" fill="none" stroke="#b08888"/></symbol>
<symbol id="b8b" viewBox="0 0 20 20"><path d="M9 1c-5-1-8 1-8 5s5 5 8 4zM12 1c5-1 7 1 7 5s-4 5-7 4z" fill="#b8c2b8" stroke="#777"/><path d="M7 4h7M7 7h7M7 10c0 4 2 6 4 9" stroke="#777" fill="none"/></symbol>
<symbol id="b9" viewBox="0 0 20 20"><path d="M1 3h18M1 10h18M1 17h18M4 6h12M4 13h12M8 3v4M12 3v4M8 10v4M12 10v4" stroke="#777" stroke-width="1.200"/></symbol>
<symbol id="b10" viewBox="0 0 20 20"><path d="M3 18C0 10 3 4 8 3l-2-2" fill="none" stroke="#777"/><path d="M10 2l8 5-8 4zM9 12l-5 6h9z" fill="#dde2dd" stroke="#777"/></symbol>
<symbol id="cr" viewBox="0 0 20 20"><path d="M8 1v18M11 7v12M1 10h18" stroke="#777" stroke-width="1.400"/><rect x="11" y="1" width="6" height="6" fill="#cfcfb0"/><rect x="1" y="13" width="6" height="6" fill="#d9b0b0"/></symbol>
<symbol id="mg" viewBox="0 0 20 20"><path d="M3.500 11c1.500 5 7.500 7.500 11 4S16.500 6 11.500 3.500" fill="none" stroke="#800" stroke-width="5"/><path d="M3.500 11c1.500 5 7.500 7.500 11 4S16.500 6 11.500 3.500" fill="none" stroke="#cc0000" stroke-width="3.800"/><path d="M1.700 11.600l3.600-1.400 1 2.200-3.500 1.700zM12.400 1.900l-1.700 3.300 2.200 1.300 2-3z" fill="#fff" stroke="#800" stroke-width=".6"/></symbol>
<symbol id="pt" viewBox="0 0 20 20"><g fill="#e4e4e4" stroke="#aaa"><circle cx="5" cy="5" r="1.500"/><circle cx="15" cy="7" r="1.500"/><circle cx="10" cy="15" r="1.500"/></g></symbol>
<symbol id="add" viewBox="0 0 20 20"><rect x="2" y="1" width="13" height="15" fill="#f6f6f6" stroke="#777" stroke-width="1.200"/><circle cx="16" cy="16" r="3" fill="#fff" stroke="#4e9a58" stroke-width="1.800"/></symbol>
<symbol id="fil" viewBox="0 0 20 20"><path d="M1 1.500h18l-7 9V19l-4-2v-6.500z" fill="#5f8fc4" stroke="#3a6796" stroke-width=".7"/><path d="M2 1h16v3H2z" fill="#fce94f" stroke="#c4a000" stroke-width=".5"/></symbol>
<symbol id="fild" viewBox="0 0 20 20"><use href="#fil"/><path d="M14 16h6l-3 3z" fill="#555"/></symbol>
<symbol id="trr" viewBox="0 0 20 20"><path d="M1 3h12M3 3v14h5M3 9h5" fill="none" stroke="#777" stroke-width="1.200"/><rect x="5" y="7" width="4.500" height="4" fill="#f39a2a"/><rect x="5" y="14" width="4.500" height="4" fill="#f39a2a"/></symbol>
<symbol id="co" viewBox="0 0 20 20"><use href="#trr"/><path d="M14.500 1.500l5 6h-2.700V17h-4.600V7.500H9.500z" fill="#5585b8" stroke="#204a75" stroke-width=".7"/></symbol>
<symbol id="ex" viewBox="0 0 20 20"><use href="#trr"/><path d="M14.500 18.500l5-6h-2.700V3h-4.600v9.500H9.500z" fill="#5585b8" stroke="#204a75" stroke-width=".7"/></symbol>
<symbol id="exs" viewBox="0 0 20 20"><use href="#ex"/><path d="M7 1l1.800 3.600 4 .4-3 2.700 1 4L7 9.500l-3.500 2.200 1-4-3-2.700 4-.4z" fill="#fcd42f" stroke="#e08a10" stroke-width=".9"/></symbol>
<symbol id="br" viewBox="0 0 20 20"><path d="M1 8l4-3 4 9-3 4z" fill="#e04438"/><path d="M4 3l7-2 2 5-7 4z" fill="#fcd42f"/><path d="M2.500 9.500l4-2 3 4-4 2.500z" fill="#5a8ed0"/><path d="M19.500 .8l-6 8-2.300-1.600 7-7.200z" fill="#d9a048" stroke="#a87018" stroke-width=".5"/><path d="M10 6.500l6 5-6 7-6-5.500z" fill="#d8a05c" stroke="#a87028" stroke-width=".8"/></symbol>
<symbol id="br2" viewBox="0 0 20 20"><path d="M19 .5l-6 9-2-1.500 7-8z" fill="#e0a848" stroke="#a87018" stroke-width=".5"/><path d="M9 7l6 5-6 7-7-6z" fill="#d8a050" stroke="#a06818" stroke-width=".8"/><path d="M9.500 7l5.500 4.800-1.500 1.700L8 8.500z" fill="#f4d090"/></symbol>
<symbol id="ag" viewBox="0 0 20 20"><path d="M6 4h9v11H6zM3 7h9v11H3z" fill="#eee" stroke="#666"/><path d="M10 1v10M8 6h3" stroke="#555" fill="none"/><rect x="12" y="13" width="6" height="6" fill="#fff" stroke="#4e9a58" stroke-width="1.600"/></symbol>
<symbol id="eye" viewBox="0 0 20 20"><path d="M1 9c5-6 12-6 17 0-5 5-12 5-17 0z" fill="#f4f4f4" stroke="#888"/><circle cx="9.500" cy="8.700" r="3.700" fill="#6d8fb4" stroke="#456"/><circle cx="9.500" cy="8.700" r="1.500" fill="#123"/><path d="M14 16h6l-3 3z" fill="#555"/></symbol>
<symbol id="eps" viewBox="0 0 20 20"><text x="1" y="13" font-size="16" font-family="DejaVu Sans" fill="#c4c4c4">ε</text><path d="M9 9h10l-4 5v5h-2v-5z" fill="#ddd" stroke="#c0c0c0"/></symbol>
<symbol id="rem" viewBox="0 0 20 20"><rect x="2" y="2" width="14" height="14" fill="#f6f6f6" stroke="#777" stroke-width="1.200"/><rect x="11" y="13" width="8" height="5" rx="1" fill="#e84c4c"/><path d="M12.500 15.500h5" stroke="#fff" stroke-width="1.300"/></symbol>
<symbol id="ras" viewBox="0 0 20 20"><rect x="1" y="1" width="18" height="18" fill="#a8c4e0"/><path d="M1 1h4.500v4.500H1zM10 1h4.500v4.500H10zM5.500 5.500H10V10H5.500zM14.500 5.500H19V10h-4.500zM10 10h4.500v4.500H10zM1 14.500h4.500V19H1z" fill="#24364f"/><path d="M5.500 1H10v4.500H5.500zM14.500 14.500H19V19h-4.500zM1 10h4.500v4.500H1z" fill="#eaf2fa"/></symbol>
<symbol id="wr" viewBox="0 0 20 20"><path d="M3 1l3 3-1 2-3-1c0 3 3 5 6 4l2-2c0-3-3-6-7-6z" fill="#ddd" stroke="#777" stroke-width=".8"/><path d="M8 8l9 9" stroke="#555" stroke-width="4.400"/><path d="M8 8l9 9" stroke="#f0d878" stroke-width="3"/></symbol>
<symbol id="src" viewBox="0 0 20 20"><circle cx="12" cy="12" r="6" fill="none" stroke="#8fb2e0" stroke-width="4" stroke-dasharray="2.700 2"/><circle cx="12" cy="12" r="4.500" fill="#dce8f4" stroke="#6a94c4"/><use href="#wr"/></symbol>
<symbol id="tra" viewBox="0 0 20 20"><path d="M1 2q0-1 2-1v2h16v16H1z" fill="#eee" stroke="#bbb" stroke-width=".8"/><path d="M3.500 3.500h15v10h-15z" fill="#b4c8e0"/><path d="M6 5l5 1-2 5zM12 4l5 2-3 5z" fill="#7c92ae"/><path d="M2 16h17" stroke="#456" stroke-width="2" stroke-dasharray="1 .7"/></symbol>
<symbol id="his" viewBox="0 0 20 20"><path d="M1 3q0-1 2-1v2h16v13H1z" fill="#f4f4f4" stroke="#ccc" stroke-width=".8"/><path d="M4 6l3 5 3-3 3 5 4-3" fill="none" stroke="#557a9e" stroke-width="1"/><path d="M4 4v11h14" fill="none" stroke="#999" stroke-width=".8"/></symbol>
<symbol id="pir" viewBox="0 0 20 20"><path d="M6 4h8l5 13H1z" fill="#eee" stroke="#bbb"/><path d="M4 9h12M2.500 13h15M6 6l3 3-4 4 4 3M13 5l-2 5 4 5" stroke="#aaa" fill="none"/></symbol>
<symbol id="ele" viewBox="0 0 20 20"><rect x="13" y="1" width="6" height="14" fill="#fce020" stroke="#b09000" stroke-width=".6"/><rect x="1" y="14" width="6" height="6" fill="#fce020" stroke="#b09000" stroke-width=".6"/><path d="M9 17V5H6.500L10 .5 13.500 5H11v12zM4 16.500h10" fill="#666" stroke="#222"/></symbol>
<symbol id="met" viewBox="0 0 20 20"><path d="M3 1h11l4 4v14H3z" fill="#fafafa" stroke="#ccc"/><path d="M5 6h8M5 9h8M5 12h6M5 15h8" stroke="#aaa" stroke-width="1.200"/><path d="M18 3l2 1.500-7 9-2.500 1 .5-2.500z" fill="#e0673a" stroke="#843" stroke-width=".5"/></symbol>
<symbol id="ley" viewBox="0 0 20 20"><rect x="1.500" y="1" width="5" height="5" fill="#fcc420"/><rect x="1.500" y="7.500" width="5" height="5" fill="#e04418"/><rect x="1.500" y="14" width="5" height="5" fill="#18b058"/><path d="M8 4.500h6M8 10.500h9M8 16.500h4" stroke="#9a9a9a" stroke-width="1.600"/></symbol>
<symbol id="dis" viewBox="0 0 20 20"><path d="M4 1h12q3 0 3 3v7q0 3-3 3h-5l-5 6 1-6H4q-3 0-3-3V4q0-3 3-3z" fill="#e8dc84" stroke="#b4a850"/><path d="M3 9V5q0-2 3-2" fill="none" stroke="#fff" stroke-width="1.300"/></symbol>
<symbol id="att" viewBox="0 0 20 20"><rect x="1" y="1" width="18" height="18" fill="#f4f6f8" stroke="#8ab"/><rect x="1.500" y="1.500" width="17" height="4.500" fill="#a9d0f0"/><path d="M3.500 8.500h5M3.500 11h5M3.500 13.500h5M3.500 16h5M11 8.500h6M11 11h6M11 13.500h6M11 16h6M3.500 4h5M11 4h6" stroke="#7a9ab8" stroke-width="1.100"/></symbol>
<symbol id="srv" viewBox="0 0 20 20"><g fill="#2a5aa8" stroke="#c4d0e0" stroke-width=".8"><rect x="9" y=".5" width="7" height="5.500"/><rect x="1" y="7" width="6.500" height="5.500"/><rect x="12.500" y="11.500" width="7" height="5.500"/></g><path d="M9 8h7M1 14h7M13 19h6.500M12 8v3M8 11h7" stroke="#c8c8c8" stroke-width="1.600"/></symbol>
<symbol id="gdal" viewBox="0 0 20 20"><circle cx="12" cy="9" r="7" fill="#5fb4dc"/><path d="M8 6l5-2 1 5-4 3z" fill="#4e8a48"/><path d="M1 4l9-3M4 1l3 5" stroke="#333" stroke-width="1.300"/><text x="-1" y="18.500" font-size="8" font-weight="700" font-family="DejaVu Sans Condensed" fill="#111">GDAL</text></symbol>
<symbol id="rc" viewBox="0 0 20 20"><rect x="2" y="1" width="17" height="16" fill="#b8cbd8"/><path d="M4 3h5v5H4zM12 3h4v5h-4zM8 8h5v5H8z" fill="#34506c"/><path d="M15 8h4v9h-8v-4h4z" fill="#e4eaf0"/></symbol>
<symbol id="cv" viewBox="0 0 20 20"><rect x="0" y="0" width="20" height="20" fill="#e0e0e0"/><path d="M20 9c-8-1-10 4-10 11h10z" fill="#b4b4b4"/><path d="M3 20C3 9 9 3 20 3M7 20c0-7 4-11 13-10" fill="none" stroke="#c05a5a" stroke-width="1.300"/></symbol>
<symbol id="gra" viewBox="0 0 20 20"><path d="M2 9l8-6 8 6-8 6z" fill="#eee" stroke="#666"/><path d="M2 12l8 6 8-6" fill="none" stroke="#666"/><path d="M10 13V3M10 12L5 6M10 12l5-6" stroke="#2a9a38" stroke-width="1.500"/></symbol>
<symbol id="pcr" viewBox="0 0 20 20"><path d="M-1 3.500h22M-1 17h22" stroke="#8aa8c8"/><text x="-1" y="14.500" font-size="11" font-family="DejaVu Sans Condensed" fill="#7a9cc4">PCR</text></symbol>
<symbol id="saga" viewBox="0 0 20 20"><circle cx="10" cy="10" r="8" fill="#fff" stroke="#1a5a98" stroke-width="2.200"/><path d="M17 5L5 9l10 3-6 6M5 9h14" fill="none" stroke="#1a5a98" stroke-width="2"/></symbol>
<symbol id="wat" viewBox="0 0 20 20"><path d="M5 19V6l10-5M5 14L18 8M7 19L19 12" stroke="#4a94dc" fill="none" stroke-width="1.500"/></symbol>
<symbol id="cog3" viewBox="0 0 20 20"><circle cx="6" cy="7" r="4" fill="#d03030" stroke="#d03030" stroke-width="4" stroke-dasharray="2 1.140"/><circle cx="15" cy="9" r="2.500" fill="#888" stroke="#888" stroke-width="2.500" stroke-dasharray="1.200 .760"/><circle cx="10" cy="16" r="2.300" fill="#a8bfe8" stroke="#a8bfe8" stroke-width="2.500" stroke-dasharray="1.200 .7"/><path d="M15 16h6l-3 3z" fill="#555"/></symbol>
<symbol id="pyd" viewBox="0 0 20 20"><use href="#py" width="18" height="18"/><path d="M15 17h6l-3 3z" fill="#555"/></symbol>
<symbol id="gdoc" viewBox="0 0 20 20"><path d="M3 1h10l4 4v14H3z" fill="#f8f8f8" stroke="#999"/><path d="M5 6h9M5 9h9M5 12h9M5 15h7" stroke="#999"/></symbol>
<symbol id="gpen" viewBox="0 0 20 20"><path d="M2 2h14v11H9l-4 3v-3H2z" fill="#d8d6cc"/><path d="M18 5l-8 11-2 3" fill="none" stroke="#c4c4c4" stroke-width="2.500"/></symbol>
<symbol id="idv" viewBox="0 0 20 20"><rect x="1" y="1.500" width="18" height="17" rx="1" fill="#e4eefa" stroke="#8fb0d8"/><path d="M3 6h4M3 13h4" stroke="#445"/><rect x="9" y="4" width="8" height="4.500" rx="1" fill="#fff" stroke="#8fb0d8"/><rect x="9" y="11" width="8" height="4.500" rx="1" fill="#fff" stroke="#8fb0d8"/></symbol>
<symbol id="pri" viewBox="0 0 20 20"><path d="M5 2h10v6H5z" fill="#eee" stroke="#ccc"/><path d="M1 8q0-2 3-2h12q3 0 3 2v6H1z" fill="#d8d8d8" stroke="#c4c4c4"/><path d="M4 12h12v6H4z" fill="#f2f2f2" stroke="#ccc"/></symbol>
<symbol id="hlp" viewBox="0 0 20 20"><rect x="1" y="1" width="18" height="18" fill="#5f8fc8" stroke="#204a75"/><path d="M1 1h4v18H1z" fill="#2a3648"/><text x="8" y="15" font-size="13" font-family="Liberation Serif" fill="#fff">?</text></symbol>
<symbol id="ids" viewBox="0 0 20 20"><rect x="1" y="1" width="18" height="16" fill="none" stroke="#777" stroke-dasharray="2 1.500"/><circle cx="7" cy="7" r="5.500" fill="#7aa0cc"/><path d="M7 4v6" stroke="#fff" stroke-width="1.500"/><path d="M10 7l9 7-4 .6 2 4-1.500.7-2-3.600-2.500 2z" fill="#fff" stroke="#555" stroke-width=".9"/></symbol>
<symbol id="gps" viewBox="0 0 20 20"><path d="M5 4l5-3 8 13-1 4-4 1z" fill="#eee" stroke="#333" stroke-width="1.400"/><path d="M7 7l5-3M9 10l5-3M11 13l5-3M2 11l3 5M17 1l1 4" fill="none" stroke="#333" stroke-width="1.200"/></symbol>
<symbol id="lock" viewBox="0 0 20 20"><path d="M6 9V6a4 4 0 0 1 8 0v3" fill="none" stroke="#999" stroke-width="2"/><rect x="4" y="9" width="12" height="10" rx="1.500" fill="#666"/></symbol>
<symbol id="bub" viewBox="0 0 20 20"><path d="M10 2c-6 0-9 3-9 7s3 7 9 7l1 0 5 3-1-4c3-1 4-4 4-6 0-4-3-7-9-7z" fill="#666"/><path d="M4.500 8.500h2.500M8.700 8.500h2.500M13 8.500h2.500" stroke="#fff" stroke-width="2.200"/></symbol>
</svg>

<header class="title"><svg class="lg"><use href="#q"/></svg><span>*Practica_1 — QGIS</span>
<svg class="wb" viewBox="0 0 90 12"><path d="M0 6.500h8M37.500 4.500h5.500v6h-5.500zM39.500 4.500V2.300H45v6.200h-2M74 2l8 8M82 2l-8 8" fill="none" stroke="#8a8a8a" stroke-width=".9"/></svg></header>
<nav class="menu"><span>Pro<u>y</u>ecto</span><span><u>E</u>dición</span><span><u>V</u>er</span><span><u>C</u>apa</span><span>Co<u>n</u>figuración</span><span>Co<u>m</u>plementos</span><span>Vect<u>o</u>rial</span><span><u>R</u>áster</span><span>Base de <u>d</u>atos</span><span><u>W</u>eb</span><span><u>M</u>alla</span><span>Pro<u>c</u>esos</span><span>A<u>y</u>uda</span></nav>

<div class="tb">
<i class="h"></i><svg><use href="#new"/></svg><svg><use href="#open"/></svg><svg><use href="#save"/></svg><svg><use href="#lay"/></svg><svg><use href="#lm"/></svg><svg><use href="#sty"/></svg>
<i class="h"></i><svg><use href="#hand"/></svg><svg><use href="#pan"/></svg><svg><use href="#zi"/></svg><svg><use href="#zo"/></svg><svg><use href="#zf"/></svg><svg><use href="#zs"/></svg><svg><use href="#zl"/></svg><svg><use href="#z1"/></svg><svg><use href="#zp"/></svg><svg class="off"><use href="#zn"/></svg><svg><use href="#nm"/></svg><svg><use href="#n3"/></svg><svg><use href="#nb"/></svg><svg><use href="#bm"/></svg><svg><use href="#clk"/></svg><svg><use href="#ref"/></svg>
<i class="h"></i><svg class="on"><use href="#sel"/></svg><b class="on off2"></b><svg class="dim"><use href="#frm"/></svg><b class="off2"></b><svg><use href="#des"/></svg><b></b><svg><use href="#slo"/></svg><b></b>
<i class="h"></i><svg><use href="#idf"/></svg><svg><use href="#aba"/></svg><svg class="on"><use href="#gear"/></svg><svg><use href="#sig"/></svg><svg><use href="#tab"/></svg><b class="off2"></b><svg><use href="#rul"/></svg><b></b><svg><use href="#tip"/></svg><svg class="dim"><use href="#act"/></svg><b class="off2"></b>
<i class="h"></i><svg><use href="#d1"/></svg><b></b><svg><use href="#d2"/></svg><b></b><svg><use href="#d3"/></svg><svg><use href="#d4"/></svg><svg><use href="#d5"/></svg><svg><use href="#d6"/></svg><svg><use href="#d7"/></svg><svg><use href="#d8"/></svg><svg><use href="#d9"/></svg><svg><use href="#d10"/></svg>
<i class="h"></i><svg><use href="#pyc"/></svg><svg><use href="#m1"/></svg><svg><use href="#m2"/></svg><svg><use href="#m3"/></svg>
</div>
<div class="tb">
<i class="h"></i><svg><use href="#ds"/></svg><svg><use href="#gpn"/></svg><svg><use href="#vn"/></svg><svg><use href="#fen"/></svg><svg><use href="#mem"/></svg><svg><use href="#men"/></svg><svg><use href="#vv"/></svg>
<i class="h"></i><svg class="off"><use href="#pes"/></svg><svg class="off"><use href="#pe"/></svg><svg class="off"><use href="#sve"/></svg><svg class="off"><use href="#lin"/></svg><b class="off2"></b><svg class="off"><use href="#vn"/></svg><svg class="off"><use href="#vt"/></svg><b class="off2"></b><svg class="off"><use href="#te"/></svg><svg class="off"><use href="#tr"/></svg><svg class="off"><use href="#cut"/></svg><svg class="off"><use href="#cop"/></svg><svg class="off"><use href="#pas"/></svg><svg class="off"><use href="#un"/></svg><svg class="off"><use href="#re"/></svg>
<i class="h"></i><svg class="off"><use href="#arc"/></svg><svg class="off"><use href="#ci"/></svg><b class="off2"></b><svg class="off"><use href="#el"/></svg><b class="off2"></b><svg class="off"><use href="#sq"/></svg><b class="off2"></b><svg class="off"><use href="#pol"/></svg><b class="off2"></b>
<i class="h"></i><svg class="off"><use href="#tri"/></svg><svg class="off"><use href="#vm"/></svg><b class="off2"></b><svg class="off"><use href="#b1"/></svg><svg class="off"><use href="#b1b"/></svg><svg class="off"><use href="#b2"/></svg><svg class="off"><use href="#b3"/></svg><svg class="off"><use href="#b4"/></svg><svg class="off"><use href="#b3"/></svg><svg class="off"><use href="#b5"/></svg><svg class="off"><use href="#b5b"/></svg><svg class="off"><use href="#b6"/></svg><svg class="off"><use href="#b7"/></svg><svg class="off"><use href="#vm"/></svg><svg class="off"><use href="#cr"/></svg><svg class="off"><use href="#b8"/></svg><svg class="off"><use href="#b8"/></svg><svg class="off"><use href="#b8b"/></svg><svg class="off"><use href="#b9"/></svg><svg class="off"><use href="#b10"/></svg><b class="off2"></b>
<i class="h"></i><svg><use href="#mg"/></svg><svg class="off"><use href="#vl"/></svg><svg class="on"><use href="#pt"/></svg><div class="spin tbspin"><span>12</span><em><svg><use href="#up"/></svg><svg><use href="#dn"/></svg></em></div><span class="more">»</span>
</div>

<main>
<aside class="left">
 <div class="dt"><span>Navegador</span><svg><use href="#dk"/></svg><svg><use href="#dx"/></svg></div>
 <div class="ib"><svg><use href="#add"/></svg><svg><use href="#ref"/></svg><svg><use href="#fil"/></svg><svg><use href="#co"/></svg><svg><use href="#inf"/></svg></div>
 <div class="box nav"><div class="rows">
  <div class="r"><svg class="a"><use href="#dn"/></svg><svg><use href="#star"/></svg>Favoritos</div>
  <div class="r l1"><svg class="a"><use href="#rt"/></svg><svg><use href="#fo"/></svg>...\Practica5_Lluvia</div>
  <div class="r l1"><svg class="a"><use href="#rt"/></svg><svg><use href="#fo"/></svg>2024-1 R-D</div>
  <div class="r l1"><svg class="a"><use href="#rt"/></svg><svg><use href="#fo"/></svg>\Geo\SIG</div>
  <div class="r l1"><svg class="a"><use href="#rt"/></svg><svg><use href="#fo"/></svg>C:\Users\eamontoyaa\Desktop</div>
  <div class="r l1"><svg class="a"><use href="#dn"/></svg><svg><use href="#foo"/></svg>C:\Users\eamontoyaa\Desktop\RD</div>
  <div class="r l2"><svg class="a"><use href="#rt"/></svg><svg><use href="#fo"/></svg>Otros</div>
  <div class="r l2"><svg class="a"><use href="#rt"/></svg><svg><use href="#fo"/></svg>Rasters</div>
  <div class="r l2"><svg class="a"><use href="#dn"/></svg><svg><use href="#foo"/></svg>Shapes</div>
  <div class="r l3"><svg class="a"><use href="#rt"/></svg><svg><use href="#foo"/></svg>Carto10000_224IVC1_RS_2009_shp</div>
  <div class="r l3 hl"><svg class="a"><use href="#rt"/></svg><svg><use href="#vec"/></svg>Mascara.shp</div>
  <div class="r l2"><svg class="a"><use href="#rt"/></svg><svg><use href="#q"/></svg>Practica_1</div>
  <div class="r l1"><svg class="a"><use href="#rt"/></svg><svg><use href="#fo"/></svg>C:\Users\eamontoyaa\Desktop\SIG_proyectoRiesgo\Estandares</div>
  <div class="r l1"><svg class="a"><use href="#rt"/></svg><svg><use href="#fo"/></svg>Mesetas_2019_earthquake</div>
  <div class="r l1"><svg class="a"><use href="#rt"/></svg><svg><use href="#fo"/></svg>Practica1_InvetarioDeslizamientos</div>
  <div class="r l1"><svg class="a"><use href="#rt"/></svg><svg><use href="#fo"/></svg>Practica1A_Cartografía_Procesos</div>
  <div class="r l1"><svg class="a"><use href="#rt"/></svg><svg><use href="#fo"/></svg>Practica1B_InvetarioDeslizamientos</div>
  <div class="r l1"><svg class="a"><use href="#rt"/></svg><svg><use href="#fo"/></svg>spatial_data</div>
  <div class="r"><svg class="a"><use href="#rt"/></svg><svg><use href="#bm"/></svg>Marcadores espaciales</div>
  <div class="r"><svg class="a"><use href="#rt"/></svg><svg><use href="#hp"/></svg>Inicio del proyecto</div>
  <div class="r"><svg class="a"><use href="#rt"/></svg><svg><use href="#ho"/></svg>Inicio</div>
  <div class="r"><svg class="a"><use href="#rt"/></svg><svg><use href="#fo"/></svg>C:\</div>
  <div class="r"><svg class="a"><use href="#rt"/></svg><svg><use href="#fo"/></svg>D:\ (OS)</div>
  <div class="r"><svg class="a"></svg><svg><use href="#gp"/></svg>GeoPackage</div>
  <div class="r"><svg class="a"></svg><svg><use href="#fe"/></svg>SpatiaLite</div>
  <div class="r"><svg class="a"></svg><svg><use href="#pg"/></svg>PostgreSQL</div>
  <div class="r"><svg class="a"></svg><svg><use href="#hana"/></svg>SAP HANA</div>
  <div class="r"><svg class="a"></svg><svg><use href="#ms"/></svg>MS SQL Server</div>
  <div class="r"><svg class="a"><use href="#dn"/></svg><svg><use href="#gl"/></svg>WMS/WMTS</div>
 </div><div class="sb"><svg><use href="#up"/></svg><i class="s-nav"></i><svg><use href="#dn"/></svg></div></div>
 <div class="dots">······</div>
 <div class="dt"><span>Capas</span><svg><use href="#dk"/></svg><svg><use href="#dx"/></svg></div>
 <div class="ib"><svg><use href="#br"/></svg><svg><use href="#ag"/></svg><svg><use href="#eye"/></svg><svg><use href="#fild"/></svg><svg><use href="#eps"/></svg><b class="off2"></b><svg><use href="#ex"/></svg><svg><use href="#co"/></svg><svg><use href="#rem"/></svg></div>
 <div class="box lyr">
  <div class="y"><svg class="a"><use href="#dn"/></svg><i class="ck">✓</i><svg class="soft"><use href="#vl"/></svg><strong>Curva_Nivel</strong></div>
  <div class="y k"><i class="ck">✓</i><i class="ln"></i>1000</div>
  <div class="y k"><i class="ck">✓</i><i class="ln g"></i>1010</div>
  <div class="y k"><i class="ck">✓</i><i class="ln p"></i></div>
  <div class="y hl"><svg class="a"><use href="#dn"/></svg><i class="ck">✓</i><svg><use href="#ras"/></svg><strong><u>DEM_mascara</u></strong></div>
  <div class="bnd">Banda 1 (Gray)</div>
  <div class="ramp"><i></i><div><span>1,910</span><span>1,430</span></div></div>
  <div class="y it"><svg class="a"></svg><i class="ck"></i><i class="pk"></i><em>Mascara</em></div>
  <div class="y it"><svg class="a"><use href="#rt"/></svg><i class="ck"></i><svg><use href="#ras"/></svg><em>DEM</em></div>
 </div>
</aside>

<section class="map">
 <canvas id="dem" width="1826" height="1212"></canvas>

 <div class="dlg d1">
  <div class="dtt"><svg><use href="#q"/></svg><span>Propiedades de capa - DEM_mascara — Simbología</span><svg class="x" viewBox="0 0 10 10"><path d="M1 1l8 8M9 1L1 9" stroke="#888" stroke-width=".9"/></svg></div>
  <div class="db">
   <div class="side"><div class="sr"><svg><use href="#mag"/></svg></div>
    <p><svg><use href="#inf"/></svg>Información</p><p><svg><use href="#src"/></svg>Fuente</p><p class="cur"><svg><use href="#br"/></svg>Simbología</p><p><svg><use href="#tra"/></svg>Transparencia</p><p><svg><use href="#his"/></svg>Histograma</p><p><svg><use href="#br2"/></svg>Representación</p><p><svg><use href="#clk"/></svg>Temporal</p><p><svg><use href="#pir"/></svg>Pirámides</p><p><svg><use href="#ele"/></svg>Elevation</p><p><svg><use href="#met"/></svg>Metadatos</p><p><svg><use href="#ley"/></svg>Leyenda</p><p><svg><use href="#dis"/></svg>Display</p><p><svg><use href="#att"/></svg>Attribute Tables</p><p><svg><use href="#srv"/></svg>Servidor de QGIS</p></div>
   <div class="pn">
    <div class="sc"><div class="scc">
     <h4><svg><use href="#dn"/></svg>Representación de bandas</h4>
     <div class="grp g1">
      <div class="f f1">Tipo de renderizador<div class="cmb">Pseudocolor monobanda<svg><use href="#dn"/></svg></div></div>
      <div class="f f2">Banda</div><div class="f f3">Mín</div>
      <div class="f f4"><svg><use href="#rt"/></svg><strong>Configuración de mín/máx</strong></div>
      <div class="f f5">Interpolación</div><div class="f f6">Rampa de color</div><div class="f f7">Sufijo unidad</div><div class="f f8">Precisión</div>
      <div class="tbl"><b>Valor</b><span>1430</span><span>1430</span><span>1430</span><span>1430</span><span>1430</span></div>
      <div class="f f9">Modo<div class="cmb">Continuo<svg><use href="#dn"/></svg></div></div>
      <div class="btn cl">Clasificar</div>
      <div class="f f10"><i class="ck"></i>Cortar fuera de rango</div>
     </div>
     <h4 class="h2"><svg><use href="#dn"/></svg>Representación de capas</h4>
     <div class="grp g2"><span>Modo de mezcla</span><div class="cmb">Normal<svg><use href="#dn"/></svg></div><div class="btn rs"><svg><use href="#un"/></svg>Restablecer</div></div>
    </div><div class="sb"><svg><use href="#up"/></svg><i class="s-d1"></i><svg><use href="#dn"/></svg></div></div>
    <div class="bs"><div class="btn es">Estilo<svg><use href="#dn"/></svg></div><div class="btn">Aceptar</div><div class="btn">Cancelar</div><div class="btn">Aplicar</div><div class="btn">Ayuda</div></div>
   </div>
  </div>
 </div>

 <div class="dlg d2">
  <div class="dtt"><svg><use href="#q"/></svg><span>Rampa de color cpt-city</span><svg class="x" viewBox="0 0 10 10"><path d="M1 1l8 8M9 1L1 9" stroke="#222" stroke-width=".9"/></svg></div>
  <div class="tabs"><span class="act">Selecciones por tema</span><span>Por autor</span></div>
  <div class="mid">
   <div class="box cat"><div class="cl2"><div class="hd">Nombre</div>
    <p>Todas las rampas</p><p>Bathymetry</p><p>Blues</p><p>Discord</p><p class="ar"><svg><use href="#rt"/></svg>Diverging</p><p>Greens</p><p>Greys</p><p class="ar"><svg><use href="#rt"/></svg>QGIS</p><p>Precipitation</p><p class="ar"><svg><use href="#rt"/></svg>Reds</p><p>Temperature</p><p class="hl">Topography</p><p>Topography/bathymetry</p></div>
    <div class="sb"><svg><use href="#up"/></svg><i class="s-cat"></i><svg><use href="#dn"/></svg></div></div>
   <div class="vdots"></div>
   <div class="pal"><h2>Selected palettes for topography (27)</h2>
    <div class="box sw"><div class="gr">
     <figure class="r1"><i class="c1"></i><span>ws-a</span></figure><figure class="r1"><i class="c2"></i><span>wt-a</span></figure><figure class="r1"><i class="c3"></i><span>os250k-feet</span></figure><figure class="r1"><i class="c4"></i><span>DEM_poster</span></figure><figure class="r1"><i class="c5"></i><span>DEM_print</span></figure>
     <figure><i class="c6"></i><span class="seld">DEM_screen</span></figure><figure><i class="c7"></i><span>tpushuf</span></figure><figure><i class="c8"></i><span>pakistan</span></figure><figure><i class="c9"></i><span>wiki-knutux</span></figure><figure class="lo"><i class="c10"></i><span>wiki-schwarzwal...</span></figure>
     <figure class="lo"><i class="c11"></i><span>wiki-schwarzwal...</span></figure><figure><i class="c12"></i><span>nrwc</span></figure>
    </div><div class="sb"><svg><use href="#up"/></svg><i class="s-sw"></i><svg><use href="#dn"/></svg></div></div>
   </div>
  </div>
  <div class="tabs2"><span class="act">Selección y Vista Previa</span><span>Información</span></div>
  <div class="pane">
   <div class="pv"><div><div class="p1"><span>Paleta</span>DEM_screen</div><div class="p2"><span>Ruta</span><div class="inp">td/DEM_screen</div></div></div><i class="big c6"></i></div>
   <div class="p3"><span>Licencia</span><div class="inp">Free to use (2004)</div></div>
  </div>
  <div class="bs2"><i class="ck"></i><span>Guardar como gradiente estándar</span><div class="btn df">Aceptar</div><div class="btn">Cancelar</div><div class="btn">Ayuda</div></div>
 </div>
</section>

<aside class="right">
 <div class="dt"><span>Caja de herramientas de Procesos</span><svg><use href="#dk"/></svg><svg><use href="#dx"/></svg></div>
 <div class="ib"><svg><use href="#cog3"/></svg><svg><use href="#pyd"/></svg><svg><use href="#clk"/></svg><svg><use href="#gdoc"/></svg><s></s><svg><use href="#gpen"/></svg><s></s><svg><use href="#wr"/></svg></div>
 <div class="srch"><svg><use href="#mag"/></svg><em>Buscar...</em></div>
 <div class="box tool"><div class="rows">
  <div class="r"><svg class="a"><use href="#rt"/></svg><svg><use href="#q"/></svg>Malla</div>
  <div class="r"><svg class="a"><use href="#rt"/></svg><svg><use href="#q"/></svg>Selección vectorial</div>
  <div class="r"><svg class="a"><use href="#rt"/></svg><svg><use href="#q"/></svg>Superposición vectorial</div>
  <div class="r"><svg class="a"><use href="#rt"/></svg><svg><use href="#q"/></svg>Tabla vectorial</div>
  <div class="r"><svg class="a"><use href="#rt"/></svg><svg><use href="#q"/></svg>Teselas 3D</div>
  <div class="r"><svg class="a"><use href="#rt"/></svg><svg><use href="#q"/></svg>Teselas vectoriales</div>
  <div class="r"><svg class="a"><use href="#rt"/></svg><svg><use href="#q"/></svg>Vector general</div>
  <div class="r"><svg class="a"><use href="#rt"/></svg><svg><use href="#d3"/></svg>Density analysis</div>
  <div class="r"><svg class="a"><use href="#dn"/></svg><svg><use href="#gdal"/></svg>GDAL</div>
  <div class="r sm"><svg class="a"><use href="#rt"/></svg>Análisis ráster</div>
  <div class="r sm"><svg class="a"><use href="#rt"/></svg>Conversión ráster</div>
  <div class="r sm"><svg class="a"><use href="#rt"/></svg>Conversión vectorial</div>
  <div class="r sm"><svg class="a"><use href="#dn"/></svg>Extracción ráster</div>
  <div class="r lf hl"><svg><use href="#rc"/></svg>Cortar ráster por capa de máscara</div>
  <div class="r lf"><svg><use href="#rc"/></svg>Cortar ráster por extensión</div>
  <div class="r lf"><svg><use href="#cv"/></svg>Curvas de nivel</div>
  <div class="r lf"><svg><use href="#cv"/></svg>Polígonos de Contorno</div>
  <div class="r sm"><svg class="a"><use href="#rt"/></svg>Geoprocesamiento vectorial</div>
  <div class="r sm"><svg class="a"><use href="#rt"/></svg>Miscelánea ráster</div>
  <div class="r sm"><svg class="a"><use href="#rt"/></svg>Miscelánea vectorial</div>
  <div class="r sm"><svg class="a"><use href="#rt"/></svg>Proyecciones ráster</div>
  <div class="r"><svg class="a"><use href="#rt"/></svg><svg><use href="#gra"/></svg>GRASS</div>
  <div class="r"><svg class="a"><use href="#rt"/></svg><svg><use href="#gear"/></svg>OpenTopography</div>
  <div class="r"><svg class="a"><use href="#rt"/></svg><svg><use href="#pcr"/></svg>PCRaster</div>
  <div class="r"><svg class="a"><use href="#rt"/></svg><svg><use href="#saga"/></svg>SAGA Next Gen</div>
  <div class="r"><svg class="a"><use href="#rt"/></svg><svg><use href="#wat"/></svg>Water Net Analyzer</div>
 </div><div class="sb"><svg><use href="#up"/></svg><i class="s-tool"></i><svg><use href="#dn"/></svg></div></div>
 <div class="bt"><span>Estilo de capas</span><span class="act">Caja de herramientas de Procesos</span></div>
 <div class="dots">······</div>
 <div class="dt"><span>Resultados de la identificación</span><svg><use href="#dk"/></svg><svg><use href="#dx"/></svg></div>
 <div class="ib ib2"><svg><use href="#idv"/></svg><s></s><svg><use href="#ex"/></svg><svg><use href="#co"/></svg><svg><use href="#exs"/></svg><s></s><svg><use href="#des"/></svg><s></s><svg class="half"><use href="#cop"/></svg><svg><use href="#pri"/></svg><s></s><svg><use href="#ids"/></svg><b></b><svg><use href="#wr"/></svg><s></s><svg><use href="#hlp"/></svg></div>
 <div class="box res"><div class="hd"><span>Objeto espacial</span><span>Valor</span></div></div>
 <div class="mo"><span>Modo</span><div class="cmb">Capa actual<svg><use href="#dn"/></svg></div></div>
 <div class="mo ve"><span>Ver</span><div class="cmb">Árbol<svg><use href="#dn"/></svg></div></div>
</aside>
</main>

<footer>
 <div class="inp loc"><svg><use href="#mag"/></svg>Escriba para localizar (Ctrl+K)</div>
 <span class="w1">Coordenada</span><div class="inp w2">2072279, 4697725</div><svg class="w3"><use href="#gps"/></svg>
 <span class="w4">Escala</span><div class="spin w5"><span>1:25515</span><em><svg><use href="#dn"/></svg></em></div>
 <svg class="w6"><use href="#lock"/></svg><span class="w7">Amplificador</span><div class="spin w8"><span>100%</span><em><svg><use href="#up"/></svg><svg><use href="#dn"/></svg></em></div>
 <span class="w9">Rotación</span><div class="spin w10"><span>0.0 °</span><em><svg><use href="#up"/></svg><svg><use href="#dn"/></svg></em></div>
 <i class="ck">✓</i><span class="w11">Representar</span><svg class="w12"><use href="#ggl"/></svg><span class="w13">EPSG:9377</span><svg class="w14"><use href="#bub"/></svg>
</footer>

<div class="note"><p>Después de seleccionar la paleta</p><p>de colores para el DEM, defina</p><p>una transparencia del 50% que</p><p class="end">se necesitará para más adelante</p></div>

<svg class="ann" viewBox="0 0 1568 840">
 <rect x="815" y="315.300" width="73.800" height="56.500" fill="none" stroke="#034687" stroke-width="1.700" stroke-dasharray="13 5"/>
 <g filter="url(#halo)" fill="none" stroke="#034687" stroke-width="3.900" stroke-linecap="round">
  <path d="M761 454.600L714 425M734 425.500L713 423.800L723 442.500"/>
  <path d="M942 403.200L895 374M915 374L894 373L903.500 391"/>
  <path d="M1146.800 545L1101 576M1109.600 558.500L1100 577L1121 574.600"/>
  <path d="M386 293L429 272M409 269.800L430.500 271.600L419 289"/>
  <path d="M1216.600 685.500L1169 656M1189.500 656.500L1168 655L1177.600 674.500"/>
  <path d="M1068.500 685.500L1021 656M1041.400 656.500L1020 655L1029.500 674.500"/>
  <g fill="#034687" stroke="none"><circle cx="761" cy="454.600" r="4.200"/><circle cx="942" cy="403.200" r="4.200"/><circle cx="1146.800" cy="545" r="4.200"/><circle cx="386" cy="293" r="4.200"/><circle cx="1216.600" cy="685.500" r="4.200"/><circle cx="1068.500" cy="685.500" r="4.200"/>
  <path d="M709.500 422l9 0-5 7zM890.500 371l9 .5-5.500 7zM1097.500 579l8-2-5.500-6zM434 270.500l-9-1.500 4 7.500zM1164.500 653l9 .5-5.500 7zM1016.500 653l9 .5-5.500 7z"/></g>
  <g class="num"><text x="772.500" y="478.700">1</text><text x="951.500" y="427.500">2</text><text x="1151.500" y="557">3</text><text x="355.500" y="316.800">4</text><text x="1226" y="710.300">5</text><text x="1078.500" y="710.300">6</text></g>
 </g>
</svg>
<script src="map.js"></script>
</body>
</html>
```
FILE: styles.css
```
html{font-size:calc(100vw / 156.8)}
*{box-sizing:border-box}
body{margin:0;width:156.8rem;height:84rem;overflow:hidden;display:flex;flex-direction:column;background:#f0f0f0;color:#111;font:.9rem/1.1 "DejaVu Sans Condensed","DejaVu Sans",sans-serif;font-stretch:condensed;letter-spacing:-.012rem;white-space:nowrap;position:relative}
p,h2,h4,figure{margin:0}
svg{display:block;flex:none;overflow:visible}
i,b,s{display:block;flex:none;font-style:normal;text-decoration:none}
.defs{position:absolute;width:0;height:0}
.title{height:1.86rem;background:#f3f3f3;display:flex;align-items:center;padding-left:.2rem;color:#868686;font:.96rem "Noto Sans",sans-serif;letter-spacing:-.035rem}
.title .lg{width:1.35rem;height:1.35rem;margin-right:.45rem}
.title .wb{width:9rem;height:1.2rem;margin-left:auto;margin-right:.75rem}
.menu{height:1.5rem;display:flex;align-items:center;gap:1.14rem;padding-left:.74rem;color:#8c8c8c;border-bottom:.07rem solid #d5d5d5;padding-top:.1rem;letter-spacing:-.0148rem}
.tb{height:3.21rem;display:flex;align-items:center;background:linear-gradient(#fbfbfb,#eee);border-bottom:.12rem solid #b4b4b4}
.tb>svg{width:2.6rem;height:2.5rem;margin:0 .045rem;padding:.25rem .3rem;border-radius:.3rem}
.tb .h{width:1.36rem;height:1.4rem;margin:0;background:radial-gradient(circle,#999 .06rem,transparent .07rem) .42rem 0/.28rem .27rem repeat-y,radial-gradient(circle,#999 .06rem,transparent .07rem) .68rem 0/.28rem .27rem repeat-y}
.tb .h:first-child{width:1rem;background-position:.26rem 0,.5rem 0}
.tb>b,.ib>b{width:.98rem;height:2.5rem;position:relative}
.tb>b:after,.ib>b:after{content:"";display:block;margin:1.05rem auto 0 .2rem;width:0;border:.32rem solid transparent;border-top:.4rem solid #444;border-bottom:0}
.off2:after{opacity:.6}
.tb .on{background:#dcdcdc;outline:.08rem solid #b0b0b0}
.off{opacity:.28;filter:grayscale(.6)}.dim{opacity:.8}.half{opacity:.5}.soft{opacity:.55}
.spin{display:flex;background:#fff;border:.09rem solid #b0b0b0;border-radius:.2rem;overflow:hidden}
.spin span{flex:1;align-self:center;padding-left:.4rem}
.spin em{width:1.1rem;border-left:.07rem solid #bbb;background:#f6f6f6;display:flex;flex-direction:column;justify-content:center;align-items:center;gap:.1rem}
.spin em svg{width:.65rem;height:.65rem}
.tbspin{width:6.8rem;height:1.6rem;background:#efefef;color:#888;margin-left:.1rem}
.tbspin span{padding-left:.15rem}
.more{margin-left:auto;margin-right:.2rem;font-size:1.2rem;color:#444}
main{height:72.27rem;display:flex;flex:none}
.left{width:34.05rem;display:flex;flex-direction:column}
.box{background:#fff;border:.08rem solid #b8b8b8}
.dt{height:1.5rem;display:flex;align-items:center;padding:0 .1rem 0 .2rem;flex:none}
.dt span{flex:1}
.dt svg{width:.98rem;height:.98rem;margin-left:0;margin-right:.12rem}
.ib{height:2.55rem;display:flex;align-items:center;padding-left:.55rem;gap:.66rem;flex:none}
.ib svg{width:1.4rem;height:1.4rem}
.ib>b{width:.7rem;margin-left:-.3rem}
.ib s{width:.07rem;height:.9rem;background:#ccc;margin:0 -.06rem}
.nav,.tool,.sw,.cat{display:flex;overflow:hidden}
.nav{height:41.95rem;letter-spacing:0}
.rows{flex:1;overflow:hidden;padding-top:.06rem}
.r{height:1.472rem;display:flex;align-items:center;padding-left:.22rem}
.r svg{width:1.4rem;height:1.4rem;margin:0 .36rem 0 .5rem}
.r .a,.y .a{width:.8rem;height:.8rem;margin:0}
.l1{padding-left:1.55rem}.l2{padding-left:2.84rem}.l3{padding-left:4.14rem}
.hl{background:#f0f0f0}
.nav .hl{margin-right:2.7rem}
.sb{width:1.14rem;flex:none;border-left:.07rem solid #bbb;background:#e2e2e2;display:flex;flex-direction:column}
.sb svg{width:1.07rem;height:1.1rem;padding:.22rem;background:#fafafa;border:0 solid #bbb;border-bottom-width:.07rem}
.sb svg:last-child{border-width:.07rem 0 0;margin-top:auto}
.sb i{background:#f9f9f9;border-bottom:.07rem solid #bbb}
.s-nav{height:22.7rem}.s-cat{height:8.6rem}
.s-tool{height:17.5rem;margin-top:13.9rem;border-top:.07rem solid #bbb}
.s-sw{height:6.9rem;margin-top:8rem;border-top:.07rem solid #bbb}
.s-d1{height:30rem}
.dots{height:.6rem;line-height:.5rem;text-align:center;color:#888;letter-spacing:.02rem;flex:none}
.left .dots{padding-left:14.0rem;text-align:left;margin-left:1rem}
.lyr{flex:1}
.y{height:1.47rem;display:flex;align-items:center;padding-left:.45rem}
.y svg{width:1.25rem;height:1.25rem}
.y .ck{margin:0 .42rem 0 .7rem}
.y:first-child{height:1.63rem}
.ck{width:1.1rem;height:1.08rem;background:#fff;border:.08rem solid #b0b0b0;font-size:1.05rem;line-height:.95rem;text-align:center;color:#000;font-weight:700;font-family:"DejaVu Sans"}
.y strong,.y em{margin-left:.6rem;font-weight:700;letter-spacing:.025rem}
.y em{color:#808080;letter-spacing:.01rem;font-style:italic}
.y svg.a+.ck{margin-left:.67rem}
.k{height:1.76rem;padding-left:2.85rem}
.k .ck{margin-left:.75rem;margin-right:.5rem}
.ln{width:1.45rem;height:.15rem;background:#222;margin-right:.55rem}
.ln.g{background:#6c6c6c}.ln.p{background:#8470f0}
.bnd{margin:.05rem 0 0 3.5rem;height:1.05rem;line-height:.95rem}
.ramp{display:flex;height:7.85rem;margin:0 0 .12rem 3.5rem}
.ramp i{width:1.32rem;background:linear-gradient(#fff,#000)}
.ramp div{display:flex;flex-direction:column;justify-content:space-between;padding:.05rem 0 0 .45rem}
.pk{width:1.3rem;height:1.3rem;background:#ffa5ab;border:.08rem solid #333;margin-right:-.05rem}
.map{position:relative;isolation:isolate;margin-left:.5rem;width:95.85rem;background:#fff;border:.08rem solid #b8b8b8;border-top-color:#ddd;overflow:hidden}
#dem{position:absolute;left:.62rem;top:5rem;width:91.3rem;height:60.6rem}
.right{width:25.95rem;margin-left:.45rem;display:flex;flex-direction:column}
.right .dt{padding-left:.3rem;padding-right:0}
.right .ib{padding-left:.75rem;gap:.63rem}
.right .ib2{gap:.65rem;padding-left:.6rem;height:2.58rem}
.ib2 svg{width:1.4rem;height:1.4rem}
.srch{height:1.8rem;background:#fff;border:.08rem solid #b0b0b0;border-radius:.2rem;display:flex;align-items:center;color:#a8a8a8;flex:none}
.srch svg{width:1.1rem;height:1.1rem;margin:0 .6rem 0 .6rem}
.tool{height:34.45rem;flex:none}
.tool .r{height:1.474rem;padding-left:.44rem}
.tool .r svg{width:1.3rem;height:1.3rem;margin:0 .45rem 0 .6rem}
.tool .r .a{width:.8rem;height:.8rem;margin:0}
.tool .sm{height:1.066rem;padding-left:2.05rem}
.tool .sm .a{margin-right:.65rem}
.tool .lf{padding-left:4.6rem}
.bt{display:flex;height:1.95rem;flex:none;margin-top:.08rem}
.bt span{height:1.72rem;border:.08rem solid #b0b0b0;border-top:0;border-radius:0 0 .25rem .25rem;background:#dedede;width:7.8rem;display:flex;align-items:center;justify-content:center}
.bt .act{height:1.87rem;width:15.3rem;background:#fafafa}
.right .dots{height:.5rem;line-height:.2rem}
.right .bt+.dots+.dt{height:1.6rem}
.res{height:19.75rem;flex:none;border-right:0}
.hd{height:1.4rem;display:flex;align-items:center;background:linear-gradient(#fff,#eee);border-bottom:.08rem solid #b8b8b8}
.hd span{width:16.85rem;flex:none;padding-left:.1rem;line-height:1.3rem}
.hd span+span{width:auto;border-left:.07rem solid #ccc}
.mo{display:flex;align-items:center;height:2.9rem;padding-left:.35rem;flex:none}
.mo span{width:2.65rem}
.cmb{display:flex;align-items:center;justify-content:space-between;background:linear-gradient(#fdfdfd,#eee);border:.09rem solid #aaa;border-radius:.2rem;height:1.8rem;padding:0 .5rem 0 .3rem}
.cmb svg{width:.75rem;height:.75rem}
.mo .cmb{width:22.5rem;height:1.92rem}
.ve{color:#8f8f8f;height:2.2rem}
.ve span{width:1.85rem}.ve .cmb{width:5.82rem;height:1.75rem;border-color:#c4c4c4}.ve .cmb svg{opacity:.5}
.btn{display:flex;align-items:center;justify-content:center;background:linear-gradient(#fefefe,#ececec);border:.09rem solid #b0b0b0;border-radius:.2rem;height:1.66rem;width:6.48rem}
.inp{display:flex;align-items:center;background:#fff;border:.09rem solid #b0b0b0;border-radius:.2rem;height:1.72rem;padding-left:.25rem}
.dlg{position:absolute;background:#f0f0f0;border-radius:.8rem;overflow:hidden}
.dtt{display:flex;align-items:center;font:.97rem "Noto Sans",sans-serif;letter-spacing:-.018rem}
.dtt svg{width:1.4rem;height:1.4rem}
.dtt .x{width:.85rem;height:.85rem;margin-left:auto}
.d1{left:8.36rem;top:1.9rem;width:81.8rem;height:54.3rem;border:.08rem solid #b4b4b4;box-shadow:0 1.2rem 3.4rem rgba(0,0,0,.3),0 0 .5rem rgba(0,0,0,.2);letter-spacing:-.008rem}
.d1 .dtt{height:2.47rem;background:#f3f3f3;color:#868686;padding:0 .85rem .2rem .65rem}
.d1 .dtt span{margin-left:.35rem}
.db{display:flex;height:51.8rem}
.side{width:12.25rem;background:#5c5c5c;color:#fff;flex:none}
.sr{height:1.7rem;background:#fff;border:.08rem solid #888;display:flex;align-items:center;padding-left:.6rem}
.side p{height:2.945rem;display:flex;align-items:center;padding-left:.35rem;line-height:1}
.sr+p{margin-top:.58rem}
.side svg{width:2rem;height:2rem;margin-right:.6rem}
.side .sr svg{width:1.2rem;height:1.2rem}
.side .cur{background:#f0f0f0;color:#111;padding-left:.55rem}
.pn{flex:1;padding-left:.2rem;min-width:0}
.sc{height:49.3rem;display:flex;overflow:hidden}
.scc{width:67.7rem;padding-left:.25rem}
.sc .sb{width:1.1rem;margin-left:.1rem}
h4{height:1.7rem;display:flex;align-items:center;font-size:.9rem;letter-spacing:.01rem}
h4 svg{width:1.2rem;height:1.2rem;margin-right:.45rem;margin-left:-.1rem}
.h2{height:1.9rem;margin-top:.3rem}
.grp{border:.07rem solid #d0d0d0;background:#eee}
.g1{height:43rem;padding:.1rem .9rem 0 1.05rem}
.f{display:flex;align-items:center}
.f1{height:3.2rem;margin-left:-.2rem}.f1 .cmb{width:13.5rem;margin-left:.5rem}
.f2{height:1.9rem}.f3{height:2.5rem}.f4{height:1.78rem}.f5{height:2.62rem}.f6{height:1.98rem}.f7{height:2.52rem}.f8{height:2.08rem}
.f4 svg{width:1.2rem;height:1.2rem;margin-right:.5rem}
.tbl{height:15.6rem;margin-top:.3rem;background:#fff;border:.08rem solid #b0b0b0;overflow:hidden}
.tbl b{height:1.4rem;font-weight:400;border-bottom:.07rem solid #bbb;padding:.3rem 0 0 .15rem;margin-bottom:.15rem;line-height:1}
.tbl span{display:flex;align-items:center;height:3.08rem;padding-left:2rem}
.f9{height:3rem}.f9 .cmb{width:20rem;margin-left:.4rem}
.cl{height:1.65rem;width:7.5rem}.f10{height:3.2rem}.f10 .ck{margin-right:.4rem}
.g2{height:2.7rem;border-bottom:0;display:flex;align-items:flex-start;padding:.7rem .9rem 0 .8rem}
.g2 span{width:6.85rem;margin-top:.5rem}
.g2 .cmb{width:25.9rem;height:2rem}
.g2 .rs{width:7.4rem;height:2rem;margin-left:auto}
.rs svg{width:1.2rem;height:1.2rem;margin-right:.1rem}
.bs{display:flex;gap:.55rem;padding:.55rem .3rem 0 .15rem}
.bs .es{margin-right:auto;justify-content:flex-end;padding-right:.3rem}
.es svg{width:.6rem;height:.6rem;margin-left:1.9rem}
.d2{left:25.25rem;top:7.9rem;width:65.45rem;height:42.5rem;border:.14rem solid #ff8c00;box-shadow:0 1.2rem 3.6rem rgba(0,0,0,.5),0 0 .5rem rgba(0,0,0,.25)}
.d2 .dtt{height:2.4rem;background:#ff8c00;color:#1c1c1c;padding:0 .8rem .1rem .55rem}
.d2 .dtt span{margin-left:.4rem}
.tabs{display:flex;margin:.94rem .85rem 0;height:2.54rem;align-items:flex-start}
.tabs span{width:31.65rem;height:1.75rem;margin-top:.18rem;border:.08rem solid #b0b0b0;background:#dedede;border-radius:.2rem .2rem 0 0;display:flex;align-items:center;justify-content:center}
.tabs .act{width:31.8rem;height:2.1rem;margin-top:0;background:linear-gradient(#fcfcfc,#f0f0f0);border-bottom:0}
.mid{display:flex;height:20.1rem;padding:0 1.25rem 0 .85rem}
.cat{width:19.5rem;height:20.1rem}
.cl2{flex:1;overflow:hidden}
.cat p{height:1.472rem;padding-left:1.9rem;font-weight:700;font-size:1.16rem;line-height:1.44rem;letter-spacing:.03rem}
.cat .ar{padding-left:.45rem;display:flex;align-items:center}
.ar svg{width:.8rem;height:.8rem;margin-right:.65rem}
.hd+p{margin-top:.02rem}
.cat .hd{padding-left:.1rem}
.vdots{width:.66rem;height:1.5rem;align-self:center;background:radial-gradient(circle,#aaa .06rem,transparent .07rem) .05rem 0/.28rem .27rem repeat-y,radial-gradient(circle,#aaa .06rem,transparent .07rem) .3rem 0/.28rem .27rem repeat-y}
.pal{flex:1}
h2{font-size:1.9rem;height:2.84rem;line-height:2.4rem;letter-spacing:.008rem}
.sw{height:17.27rem}
.gr{flex:1;display:grid;grid-template-columns:repeat(5,8.18rem);grid-template-rows:5rem 6.1rem 6.1rem;overflow:hidden}
figure{display:flex;flex-direction:column;align-items:center}
figure i{width:6.1rem;height:4.06rem;margin-bottom:.2rem}
.r1 i{height:2.92rem;margin-bottom:.22rem}
figure span{padding:.03rem .15rem}
.lo i{margin-bottom:.6rem}
.seld{background:#0f7bdc;color:#fff}
.c1{background:linear-gradient(90deg,#ffc0e0,#f8c4f8 12%,#d8d8ff 28%,#e0e8ff 40%,#f8faff 70%,#fff)}
.c2{background:linear-gradient(90deg,#f0f0c0,#d0f4b0 30%,#80f0b0 48%,#b0ecd0 58%,#e4e4e4 72%,#fff)}
.c3{background:linear-gradient(90deg,#fff 5%,#fffff0 5% 12%,#fffde0 12% 22%,#ffe8c0 22% 32%,#ffd8a4 32% 46%,#ffc890 46% 69%,#ffb488 69%)}
.c4{background:linear-gradient(90deg,#006838,#8aa850 6%,#e8c878 12%,#a84808 22%,#a00000 38%,#6c3838 50%,#666 60%,#c0c0c0 70%,#fff 80%)}
.c5{background:linear-gradient(90deg,#2a6a00,#80c020 14%,#ffffc8 27%,#f4c050 50%,#683008 62% 78%,#c8a890 88%,#fff)}
.c6{background:linear-gradient(90deg,#008435,#33cc00 13%,#f4f071 26%,#f4bd45 51%,#99642b 76%,#fff)}
.c7{background:linear-gradient(90deg,#98aca0,#c0ccc0 15%,#d8d4c4 30%,#dcc4b8 42%,#dcccc4 55%,#d4ccc8 75%,#e0e0e4)}
.c8{background:linear-gradient(90deg,#d4e4c0 0 4%,#f0e8cc 4% 12%,#f0e0b8 12% 19%,#e8cc9c 19% 24%,#e0c494 24% 36%,#c8b8e0 36% 47%,#dcd4ec 47% 71%,#f4f4ff 71%)}
.c9{background:linear-gradient(90deg,#4cb060 0 14%,#78c858 14% 26%,#b4d868 26% 39%,#dce070 39% 51%,#ffe818 51% 63%,#fccc0c 63% 76%,#ff9c0c 76% 88%,#ff7c10 88%)}
.c10{background:linear-gradient(90deg,#a8f0c8,#fcfcc0 14%,#18984c 26%,#98a838 35%,#fcb80c 44%,#d84808 50%,#800000 58%,#6c1c04 68%,#643010 76%,#b0b0b0 88%,#e0e0e0)}
.c11{background:linear-gradient(90deg,#a8f0c8,#fcfcc0 10% 14%,#40b050 18% 22%,#109838 28%,#a0a838 37%,#fcb40c 44%,#f06c08 48%,#c83008 54%,#7c0404 60%,#6c2008 70%,#583420 78%,#a09088 86%,#d8d8d8)}
.c12{background:radial-gradient(ellipse at 10% 10%,rgba(150,160,155,.95),transparent 50%),linear-gradient(125deg,transparent 38%,rgba(225,235,210,.45) 52%,transparent 68%),radial-gradient(ellipse at 100% 50%,rgba(240,220,200,.8),transparent 22%),linear-gradient(90deg,#000,#1c3020 18%,#4a9868 42%,#e8d884 70%,#c07840 92%,#d87c38)}
.tabs2{display:flex;margin:.98rem 0 0 .85rem;height:1.9rem;align-items:flex-start;position:relative;z-index:1}
.tabs2 span{height:1.7rem;width:6.3rem;margin-top:.2rem;border:.08rem solid #b8b8b8;background:#e4e4e4;border-radius:.2rem .2rem 0 0;display:flex;align-items:center;justify-content:center}
.tabs2 .act{width:11.15rem;height:2rem;margin-top:0;background:#fcfcfc;border-bottom:0}
.pane{margin:0 .85rem;height:10.2rem;border:.08rem solid #b8b8b8;background:#fcfcfc;padding:1.55rem .8rem 0 .75rem}
.pv{display:flex;justify-content:space-between}
.big{width:24.25rem;height:4.08rem;margin-right:.25rem}
.p1,.p2,.p3{display:flex;align-items:center}
.p1 span,.p2 span,.p3 span{width:4.35rem}
.p1{height:1.7rem}.p2{margin-top:1.22rem}.p2 .inp{width:31.1rem}
.p3{margin-top:.9rem}.p3 .inp{flex:1}
.bs2{display:flex;align-items:center;padding:.67rem .85rem 0;gap:.55rem}
.bs2 span{margin-right:auto;margin-left:-.15rem}
.df{border-color:#5aaeea;background:linear-gradient(#f4f9ff,#eaf0f6)}
footer{flex:1;display:flex;align-items:flex-start;padding-top:.28rem;height:1.95rem;overflow:visible}
footer>span{line-height:1.75rem}
footer>svg,footer>.ck{margin-top:.3rem}
footer>svg{width:1.3rem;height:1.3rem}
.loc{width:20.6rem;margin-left:.35rem;color:#777;height:1.9rem;flex:none}
.loc svg{width:1.1rem;height:1.1rem;margin:0 .5rem 0 .4rem}
.w1{margin-left:66.08rem;width:5.17rem}
.w2{width:8.56rem;justify-content:center;height:1.85rem;padding:0}
.w3{margin-left:.4rem}.w4{margin-left:1.05rem;width:2.8rem}
.w5{width:6.5rem;height:1.85rem}.w5 em{width:1.6rem}
footer .spin{height:1.85rem}
.w6{margin-left:.85rem}.w7{width:5rem;margin-left:.58rem}.w8{width:6.8rem}
.w9{margin-left:.7rem;width:4.3rem}.w10{width:6.83rem}
footer>.ck{margin-left:.5rem}
.w11{width:6.2rem;margin-left:.4rem}.w13{width:5.9rem;margin-left:.1rem}.w14{margin-left:.4rem}
.note{position:absolute;left:14.73rem;top:31.94rem;width:27.46rem;height:9.46rem;background:rgba(190,190,190,.78);padding:.55rem 1.25rem;font:300 1.72rem/2.06rem "Open Sans","Noto Sans",sans-serif;color:#000;-webkit-text-stroke:.015rem #000}
.note p{height:2.06rem;text-align-last:justify;letter-spacing:-.012rem;word-spacing:-.08rem;width:24.96rem}
.note .end{text-align-last:left}
.ann{position:absolute;left:0;top:0;width:156.8rem;height:84rem;pointer-events:none}
.num{font:300 44px "Open Sans","Noto Sans",sans-serif;fill:#034687;stroke:#034687;stroke-width:.8px}
```
FILE: map.js
```
// Hill shading and contour lines of the elevation layer, two samples per map unit.
(function () {
  var cv = document.getElementById('dem'), c = cv.getContext('2d');
  var W = cv.width, H = cv.height, S = 2, X0 = 353, Y0 = 148;
  function hash(i, j) {
    var n = Math.imul(i, 374761393) + Math.imul(j, 668265263);
    n = Math.imul(n ^ (n >>> 13), 1274126177);
    return ((n ^ (n >>> 16)) >>> 0) / 4294967295;
  }
  function noise(x, y) {
    var i = Math.floor(x), j = Math.floor(y), u = x - i, v = y - j;
    u = u * u * (3 - 2 * u); v = v * v * (3 - 2 * v);
    var a = hash(i, j), b = hash(i + 1, j), d = hash(i, j + 1), e = hash(i + 1, j + 1);
    return a + (b - a) * u + (d - a) * v + (a - b - d + e) * u * v;
  }
  function fbm(x, y) {
    return noise(x, y) * .54 + noise(x * 2.1 + 7, y * 2.1) * .28 + noise(x * 4.3, y * 4.3 + 5) * .13 + noise(x * 9, y * 9) * .05 - .5;
  }
  function ramp(t, p) {
    for (var k = 1; k < p.length; k++) if (t <= p[k][0]) {
      var f = (t - p[k - 1][0]) / (p[k][0] - p[k - 1][0]);
      return p[k - 1][1] + (p[k][1] - p[k - 1][1]) * Math.max(0, f);
    }
    return p[p.length - 1][1];
  }
  // Valley along a segment: depth falls off with the distance to it.
  function valley(x, y, ax, ay, bx, by, r, depth) {
    var ux = bx - ax, uy = by - ay, t = ((x - ax) * ux + (y - ay) * uy) / (ux * ux + uy * uy);
    t = Math.max(0, Math.min(1, t));
    var dx = x - ax - t * ux, dy = y - ay - t * uy;
    return -depth * Math.exp(-(dx * dx + dy * dy) / (r * r));
  }
  var west = [[353, 40], [430, 46], [520, 66], [640, 84], [760, 100], [850, 134], [1000, 150], [1090, 146], [1180, 158], [1270, 170]];
  var east = [[148, 190], [190, 210], [240, 238], [350, 238], [410, 200], [470, 180], [530, 150], [580, 105], [620, 115], [680, 160]];
  var out = [0, 0];
  function height(x, y) {
    var w = fbm(x / 26 + 3, y / 26) * 30, z = fbm(x / 26, y / 26 + 40) * 30;
    var X = x + w, Y = y + z;
    var b = y > 660 || x < 500 ? ramp(x, west) : ramp(y, east);
    b += valley(X, Y, 395, 752, 470, 690, 13, 24) + valley(X, Y, 1165, 765, 1215, 672, 17, 92) +
      valley(X, Y, 1085, 765, 1100, 715, 12, 76) + valley(X, Y, 1100, 715, 1165, 660, 9, 54) + valley(X, Y, 780, 665, 830, 655, 10, 30);
    var f = fbm(X / 48, Y / 48);
    var amp = x < 500 ? 42 : x < 800 ? 60 : 82;
    if (x > 1240 && y < 650) amp = 60;
    out[0] = b + amp * .38 * f;
    out[1] = b + amp * 1.2 * f;
  }
  function inside(x, y) {
    if (x > 1252) return x < 1263.5 + noise(y, 1) + (y < 600 ? 1.5 : 0) && y < 753.5;
    if (x > 1246) return y < 753.5;
    var jag = Math.random() * .8;
    if (y < 655) return x < 432 && y > ramp(x, [[353, 586], [372, 577], [374, 571], [385, 564], [396, 560], [409, 565], [420, 567.5], [432, 565]]);
    return y < (x < 513 ? 747.5 : x < 721 ? 749.5 : x < 930 ? 751.2 : x < 1145 ? 752.5 : 753.5) + jag;
  }
  var s = new Float32Array(W * H), h = new Float32Array(W * H), m = new Uint8Array(W * H), i, j, k;
  for (j = 0; j < H; j++) for (i = 0; i < W; i++) {
    var x = X0 + i / S, y = Y0 + j / S;
    if (inside(x, y)) { k = j * W + i; m[k] = 1; height(x, y); s[k] = out[0]; h[k] = out[1]; }
  }
  var im = c.createImageData(W, H), D = im.data;
  for (j = 1; j < H; j++) for (i = 1; i < W; i++) {
    k = j * W + i;
    if (!m[k]) continue;
    var v = h[k], step = 3.3;
    var gx = m[k - 1] ? v - h[k - 1] : 0, gy = m[k - W] ? v - h[k - W] : 0;
    var gr = Math.sqrt(gx * gx + gy * gy) + 1e-4;
    var n = Math.round(v / step), d = Math.abs(v / step - n) * step / gr;
    var bold = n % 5 === 0, wd = bold ? 2.3 : .6;
    var a = Math.max(0, Math.min(1, wd / 2 + .5 - d));
    var tone = Math.max(20, Math.min(238, s[k]));
    var ink = bold ? 8 : tone < 84 ? tone + 14 : tone * .55;
    D[k * 4] = D[k * 4 + 1] = D[k * 4 + 2] = tone * (1 - a) + ink * a;
    D[k * 4 + 3] = 255;
  }
  c.putImageData(im, 0, 0);
})();
```
